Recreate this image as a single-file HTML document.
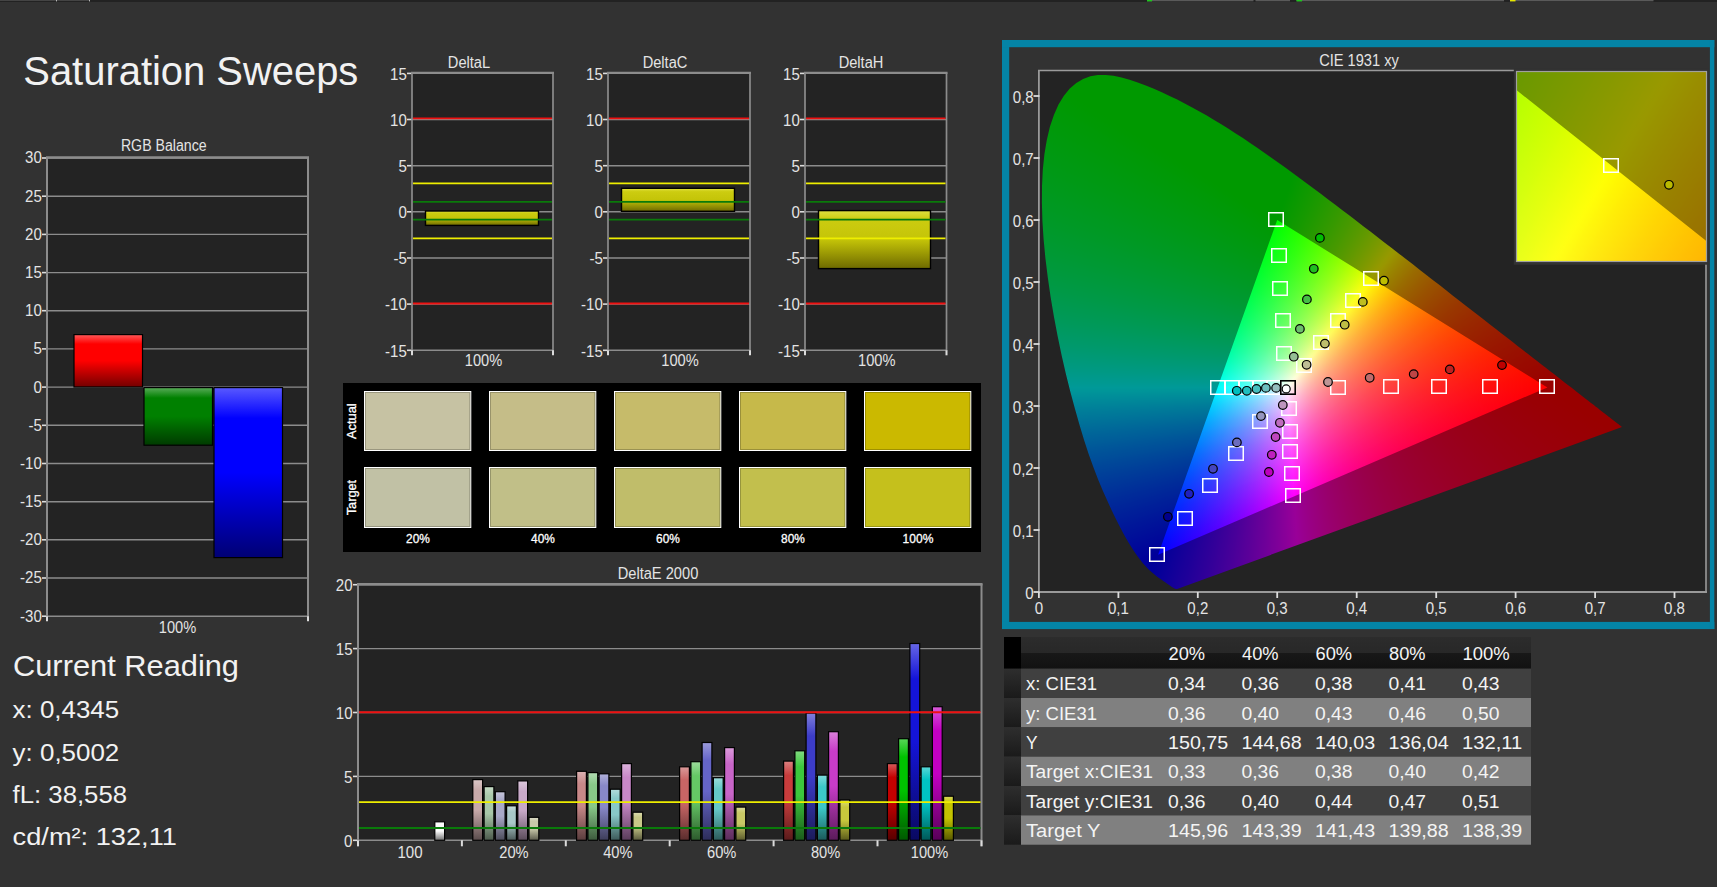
<!DOCTYPE html>
<html lang="en"><head><meta charset="utf-8"><title>Saturation Sweeps</title>
<style>
html,body{margin:0;padding:0;background:#323232;}
body{width:1717px;height:887px;position:relative;overflow:hidden;font-family:"Liberation Sans", sans-serif;}
svg{position:absolute;left:0;top:0;}
svg text{font-family:"Liberation Sans", sans-serif;}
.pbg{position:absolute;background:#232323;}
.cbox{position:absolute;overflow:hidden;isolation:isolate;}
.cl{position:absolute;left:0;top:0;right:0;bottom:0;mix-blend-mode:darken;}
.cl:first-child{mix-blend-mode:normal;}
.dk{position:absolute;left:0;top:0;right:0;bottom:0;background:rgba(0,0,0,0.4);}
</style></head>
<body>
<svg width="1717" height="887" viewBox="0 0 1717 887"><defs><linearGradient id="g1" x1="0" y1="0" x2="0" y2="1"><stop offset="0" stop-color="#ff5959"/><stop offset="0.18" stop-color="#ff0000"/><stop offset="0.5" stop-color="#ff0000"/><stop offset="1" stop-color="#730000"/></linearGradient><linearGradient id="g2" x1="0" y1="0" x2="0" y2="1"><stop offset="0" stop-color="#59ac59"/><stop offset="0.18" stop-color="#008000"/><stop offset="0.5" stop-color="#008000"/><stop offset="1" stop-color="#003a00"/></linearGradient><linearGradient id="g3" x1="0" y1="0" x2="0" y2="1"><stop offset="0" stop-color="#5959ff"/><stop offset="0.18" stop-color="#0000ff"/><stop offset="0.5" stop-color="#0000ff"/><stop offset="1" stop-color="#000073"/></linearGradient><linearGradient id="g4" x1="0" y1="0" x2="0" y2="1"><stop offset="0" stop-color="#e0e040"/><stop offset="0.15" stop-color="#cccc10"/><stop offset="0.5" stop-color="#c4c408"/><stop offset="1" stop-color="#6e6a00"/></linearGradient><linearGradient id="g5" x1="0" y1="0" x2="0" y2="1"><stop offset="0" stop-color="#e0e040"/><stop offset="0.15" stop-color="#cccc10"/><stop offset="0.5" stop-color="#c4c408"/><stop offset="1" stop-color="#6e6a00"/></linearGradient><linearGradient id="g6" x1="0" y1="0" x2="0" y2="1"><stop offset="0" stop-color="#e0e040"/><stop offset="0.15" stop-color="#cccc10"/><stop offset="0.5" stop-color="#c4c408"/><stop offset="1" stop-color="#6e6a00"/></linearGradient><linearGradient id="g7" x1="0" y1="0" x2="0" y2="1"><stop offset="0" stop-color="#fcfcfc"/><stop offset="0.18" stop-color="#fafafa"/><stop offset="0.5" stop-color="#fafafa"/><stop offset="1" stop-color="#707070"/></linearGradient><linearGradient id="g8" x1="0" y1="0" x2="0" y2="1"><stop offset="0" stop-color="#dbc7c7"/><stop offset="0.18" stop-color="#c8a9a9"/><stop offset="0.5" stop-color="#c8a9a9"/><stop offset="1" stop-color="#5a4c4c"/></linearGradient><linearGradient id="g9" x1="0" y1="0" x2="0" y2="1"><stop offset="0" stop-color="#c7dbc7"/><stop offset="0.18" stop-color="#a9c8a9"/><stop offset="0.5" stop-color="#a9c8a9"/><stop offset="1" stop-color="#4c5a4c"/></linearGradient><linearGradient id="g10" x1="0" y1="0" x2="0" y2="1"><stop offset="0" stop-color="#c7c7db"/><stop offset="0.18" stop-color="#a9a9c8"/><stop offset="0.5" stop-color="#a9a9c8"/><stop offset="1" stop-color="#4c4c5a"/></linearGradient><linearGradient id="g11" x1="0" y1="0" x2="0" y2="1"><stop offset="0" stop-color="#c7dbdb"/><stop offset="0.18" stop-color="#a9c8c8"/><stop offset="0.5" stop-color="#a9c8c8"/><stop offset="1" stop-color="#4c5a5a"/></linearGradient><linearGradient id="g12" x1="0" y1="0" x2="0" y2="1"><stop offset="0" stop-color="#dbc7db"/><stop offset="0.18" stop-color="#c8a9c8"/><stop offset="0.5" stop-color="#c8a9c8"/><stop offset="1" stop-color="#5a4c5a"/></linearGradient><linearGradient id="g13" x1="0" y1="0" x2="0" y2="1"><stop offset="0" stop-color="#dbdbc7"/><stop offset="0.18" stop-color="#c8c8a9"/><stop offset="0.5" stop-color="#c8c8a9"/><stop offset="1" stop-color="#5a5a4c"/></linearGradient><linearGradient id="g14" x1="0" y1="0" x2="0" y2="1"><stop offset="0" stop-color="#dbb2b2"/><stop offset="0.18" stop-color="#c88888"/><stop offset="0.5" stop-color="#c88888"/><stop offset="1" stop-color="#5a3d3d"/></linearGradient><linearGradient id="g15" x1="0" y1="0" x2="0" y2="1"><stop offset="0" stop-color="#b2dbb2"/><stop offset="0.18" stop-color="#88c888"/><stop offset="0.5" stop-color="#88c888"/><stop offset="1" stop-color="#3d5a3d"/></linearGradient><linearGradient id="g16" x1="0" y1="0" x2="0" y2="1"><stop offset="0" stop-color="#b2b2db"/><stop offset="0.18" stop-color="#8888c8"/><stop offset="0.5" stop-color="#8888c8"/><stop offset="1" stop-color="#3d3d5a"/></linearGradient><linearGradient id="g17" x1="0" y1="0" x2="0" y2="1"><stop offset="0" stop-color="#b2dbdb"/><stop offset="0.18" stop-color="#88c8c8"/><stop offset="0.5" stop-color="#88c8c8"/><stop offset="1" stop-color="#3d5a5a"/></linearGradient><linearGradient id="g18" x1="0" y1="0" x2="0" y2="1"><stop offset="0" stop-color="#dbb2db"/><stop offset="0.18" stop-color="#c888c8"/><stop offset="0.5" stop-color="#c888c8"/><stop offset="1" stop-color="#5a3d5a"/></linearGradient><linearGradient id="g19" x1="0" y1="0" x2="0" y2="1"><stop offset="0" stop-color="#dbdbb2"/><stop offset="0.18" stop-color="#c8c888"/><stop offset="0.5" stop-color="#c8c888"/><stop offset="1" stop-color="#5a5a3d"/></linearGradient><linearGradient id="g20" x1="0" y1="0" x2="0" y2="1"><stop offset="0" stop-color="#db9b9b"/><stop offset="0.18" stop-color="#c86565"/><stop offset="0.5" stop-color="#c86565"/><stop offset="1" stop-color="#5a2d2d"/></linearGradient><linearGradient id="g21" x1="0" y1="0" x2="0" y2="1"><stop offset="0" stop-color="#9bdb9b"/><stop offset="0.18" stop-color="#65c865"/><stop offset="0.5" stop-color="#65c865"/><stop offset="1" stop-color="#2d5a2d"/></linearGradient><linearGradient id="g22" x1="0" y1="0" x2="0" y2="1"><stop offset="0" stop-color="#9b9bdb"/><stop offset="0.18" stop-color="#6565c8"/><stop offset="0.5" stop-color="#6565c8"/><stop offset="1" stop-color="#2d2d5a"/></linearGradient><linearGradient id="g23" x1="0" y1="0" x2="0" y2="1"><stop offset="0" stop-color="#9bdbdb"/><stop offset="0.18" stop-color="#65c8c8"/><stop offset="0.5" stop-color="#65c8c8"/><stop offset="1" stop-color="#2d5a5a"/></linearGradient><linearGradient id="g24" x1="0" y1="0" x2="0" y2="1"><stop offset="0" stop-color="#db9bdb"/><stop offset="0.18" stop-color="#c865c8"/><stop offset="0.5" stop-color="#c865c8"/><stop offset="1" stop-color="#5a2d5a"/></linearGradient><linearGradient id="g25" x1="0" y1="0" x2="0" y2="1"><stop offset="0" stop-color="#dbdb9b"/><stop offset="0.18" stop-color="#c8c865"/><stop offset="0.5" stop-color="#c8c865"/><stop offset="1" stop-color="#5a5a2d"/></linearGradient><linearGradient id="g26" x1="0" y1="0" x2="0" y2="1"><stop offset="0" stop-color="#db8080"/><stop offset="0.18" stop-color="#c83c3c"/><stop offset="0.5" stop-color="#c83c3c"/><stop offset="1" stop-color="#5a1b1b"/></linearGradient><linearGradient id="g27" x1="0" y1="0" x2="0" y2="1"><stop offset="0" stop-color="#80db80"/><stop offset="0.18" stop-color="#3cc83c"/><stop offset="0.5" stop-color="#3cc83c"/><stop offset="1" stop-color="#1b5a1b"/></linearGradient><linearGradient id="g28" x1="0" y1="0" x2="0" y2="1"><stop offset="0" stop-color="#8080db"/><stop offset="0.18" stop-color="#3c3cc8"/><stop offset="0.5" stop-color="#3c3cc8"/><stop offset="1" stop-color="#1b1b5a"/></linearGradient><linearGradient id="g29" x1="0" y1="0" x2="0" y2="1"><stop offset="0" stop-color="#80dbdb"/><stop offset="0.18" stop-color="#3cc8c8"/><stop offset="0.5" stop-color="#3cc8c8"/><stop offset="1" stop-color="#1b5a5a"/></linearGradient><linearGradient id="g30" x1="0" y1="0" x2="0" y2="1"><stop offset="0" stop-color="#db80db"/><stop offset="0.18" stop-color="#c83cc8"/><stop offset="0.5" stop-color="#c83cc8"/><stop offset="1" stop-color="#5a1b5a"/></linearGradient><linearGradient id="g31" x1="0" y1="0" x2="0" y2="1"><stop offset="0" stop-color="#dbdb80"/><stop offset="0.18" stop-color="#c8c83c"/><stop offset="0.5" stop-color="#c8c83c"/><stop offset="1" stop-color="#5a5a1b"/></linearGradient><linearGradient id="g32" x1="0" y1="0" x2="0" y2="1"><stop offset="0" stop-color="#d85959"/><stop offset="0.18" stop-color="#c30000"/><stop offset="0.5" stop-color="#c30000"/><stop offset="1" stop-color="#580000"/></linearGradient><linearGradient id="g33" x1="0" y1="0" x2="0" y2="1"><stop offset="0" stop-color="#59d859"/><stop offset="0.18" stop-color="#00c300"/><stop offset="0.5" stop-color="#00c300"/><stop offset="1" stop-color="#005800"/></linearGradient><linearGradient id="g34" x1="0" y1="0" x2="0" y2="1"><stop offset="0" stop-color="#6666e5"/><stop offset="0.18" stop-color="#1414d7"/><stop offset="0.5" stop-color="#1414d7"/><stop offset="1" stop-color="#090961"/></linearGradient><linearGradient id="g35" x1="0" y1="0" x2="0" y2="1"><stop offset="0" stop-color="#59d8d8"/><stop offset="0.18" stop-color="#00c3c3"/><stop offset="0.5" stop-color="#00c3c3"/><stop offset="1" stop-color="#005858"/></linearGradient><linearGradient id="g36" x1="0" y1="0" x2="0" y2="1"><stop offset="0" stop-color="#d859d8"/><stop offset="0.18" stop-color="#c300c3"/><stop offset="0.5" stop-color="#c300c3"/><stop offset="1" stop-color="#580058"/></linearGradient><linearGradient id="g37" x1="0" y1="0" x2="0" y2="1"><stop offset="0" stop-color="#d8d859"/><stop offset="0.18" stop-color="#c3c300"/><stop offset="0.5" stop-color="#c3c300"/><stop offset="1" stop-color="#585800"/></linearGradient><linearGradient id="g38" x1="0" y1="0" x2="0" y2="1"><stop offset="0" stop-color="#2c2c2c"/><stop offset="0.49" stop-color="#282828"/><stop offset="0.5" stop-color="#181818"/><stop offset="1" stop-color="#121212"/></linearGradient><linearGradient id="g39" x1="0" y1="0" x2="0" y2="1"><stop offset="0" stop-color="#2e2e2e"/><stop offset="0.5" stop-color="#242424"/><stop offset="1" stop-color="#1a1a1a"/></linearGradient><linearGradient id="g40" x1="0" y1="0" x2="0" y2="1"><stop offset="0" stop-color="#2e2e2e"/><stop offset="0.5" stop-color="#242424"/><stop offset="1" stop-color="#1a1a1a"/></linearGradient><linearGradient id="g41" x1="0" y1="0" x2="0" y2="1"><stop offset="0" stop-color="#2e2e2e"/><stop offset="0.5" stop-color="#242424"/><stop offset="1" stop-color="#1a1a1a"/></linearGradient><linearGradient id="g42" x1="0" y1="0" x2="0" y2="1"><stop offset="0" stop-color="#2e2e2e"/><stop offset="0.5" stop-color="#242424"/><stop offset="1" stop-color="#1a1a1a"/></linearGradient><linearGradient id="g43" x1="0" y1="0" x2="0" y2="1"><stop offset="0" stop-color="#2e2e2e"/><stop offset="0.5" stop-color="#242424"/><stop offset="1" stop-color="#1a1a1a"/></linearGradient><linearGradient id="g44" x1="0" y1="0" x2="0" y2="1"><stop offset="0" stop-color="#2e2e2e"/><stop offset="0.5" stop-color="#242424"/><stop offset="1" stop-color="#1a1a1a"/></linearGradient></defs>
<rect x="0.0" y="0.0" width="1717.0" height="2.0" fill="#222"/>
<rect x="0.0" y="0.0" width="90.0" height="1.0" fill="#444"/>
<rect x="56.0" y="0.0" width="1.0" height="1.4" fill="#bbb"/>
<rect x="89.0" y="0.0" width="1.0" height="1.4" fill="#bbb"/>
<rect x="1147.0" y="0.0" width="106.5" height="1.3" fill="#5a5a5a"/>
<rect x="1255.5" y="0.0" width="34.5" height="1.3" fill="#5a5a5a"/>
<rect x="1296.5" y="0.0" width="207.5" height="1.3" fill="#5a5a5a"/>
<rect x="1510.0" y="0.0" width="143.5" height="1.3" fill="#5a5a5a"/>
<rect x="1147.0" y="0.0" width="5.0" height="1.4" fill="#1ec81e"/>
<rect x="1296.5" y="0.0" width="5.5" height="1.4" fill="#1ec81e"/>
<rect x="1510.0" y="0.0" width="5.5" height="1.4" fill="#e6e600"/>
<text x="23.3" y="85.0" font-size="40" text-anchor="start" fill="#f2f2f2" textLength="335.0" lengthAdjust="spacingAndGlyphs">Saturation Sweeps</text>
<rect x="47.0" y="158.0" width="261.0" height="458.2" fill="#232323"/>
<line x1="47.0" y1="158.0" x2="308.0" y2="158.0" stroke="#8c8c8c" stroke-width="1.4"/>
<line x1="42.0" y1="158.0" x2="47.0" y2="158.0" stroke="#dcdcdc" stroke-width="1.6"/>
<text x="41.8" y="163.4" font-size="16" text-anchor="end" fill="#e4e4e4" textLength="16.7" lengthAdjust="spacingAndGlyphs">30</text>
<line x1="47.0" y1="196.2" x2="308.0" y2="196.2" stroke="#8c8c8c" stroke-width="1.4"/>
<line x1="42.0" y1="196.2" x2="47.0" y2="196.2" stroke="#dcdcdc" stroke-width="1.6"/>
<text x="41.8" y="201.6" font-size="16" text-anchor="end" fill="#e4e4e4" textLength="16.7" lengthAdjust="spacingAndGlyphs">25</text>
<line x1="47.0" y1="234.4" x2="308.0" y2="234.4" stroke="#8c8c8c" stroke-width="1.4"/>
<line x1="42.0" y1="234.4" x2="47.0" y2="234.4" stroke="#dcdcdc" stroke-width="1.6"/>
<text x="41.8" y="239.8" font-size="16" text-anchor="end" fill="#e4e4e4" textLength="16.7" lengthAdjust="spacingAndGlyphs">20</text>
<line x1="47.0" y1="272.6" x2="308.0" y2="272.6" stroke="#8c8c8c" stroke-width="1.4"/>
<line x1="42.0" y1="272.6" x2="47.0" y2="272.6" stroke="#dcdcdc" stroke-width="1.6"/>
<text x="41.8" y="277.9" font-size="16" text-anchor="end" fill="#e4e4e4" textLength="16.7" lengthAdjust="spacingAndGlyphs">15</text>
<line x1="47.0" y1="310.7" x2="308.0" y2="310.7" stroke="#8c8c8c" stroke-width="1.4"/>
<line x1="42.0" y1="310.7" x2="47.0" y2="310.7" stroke="#dcdcdc" stroke-width="1.6"/>
<text x="41.8" y="316.1" font-size="16" text-anchor="end" fill="#e4e4e4" textLength="16.7" lengthAdjust="spacingAndGlyphs">10</text>
<line x1="47.0" y1="348.9" x2="308.0" y2="348.9" stroke="#8c8c8c" stroke-width="1.4"/>
<line x1="42.0" y1="348.9" x2="47.0" y2="348.9" stroke="#dcdcdc" stroke-width="1.6"/>
<text x="41.8" y="354.3" font-size="16" text-anchor="end" fill="#e4e4e4" textLength="8.4" lengthAdjust="spacingAndGlyphs">5</text>
<line x1="47.0" y1="387.1" x2="308.0" y2="387.1" stroke="#8c8c8c" stroke-width="1.4"/>
<line x1="42.0" y1="387.1" x2="47.0" y2="387.1" stroke="#dcdcdc" stroke-width="1.6"/>
<text x="41.8" y="392.5" font-size="16" text-anchor="end" fill="#e4e4e4" textLength="8.4" lengthAdjust="spacingAndGlyphs">0</text>
<line x1="47.0" y1="425.3" x2="308.0" y2="425.3" stroke="#8c8c8c" stroke-width="1.4"/>
<line x1="42.0" y1="425.3" x2="47.0" y2="425.3" stroke="#dcdcdc" stroke-width="1.6"/>
<text x="41.8" y="430.7" font-size="16" text-anchor="end" fill="#e4e4e4" textLength="13.4" lengthAdjust="spacingAndGlyphs">-5</text>
<line x1="47.0" y1="463.5" x2="308.0" y2="463.5" stroke="#8c8c8c" stroke-width="1.4"/>
<line x1="42.0" y1="463.5" x2="47.0" y2="463.5" stroke="#dcdcdc" stroke-width="1.6"/>
<text x="41.8" y="468.9" font-size="16" text-anchor="end" fill="#e4e4e4" textLength="21.7" lengthAdjust="spacingAndGlyphs">-10</text>
<line x1="47.0" y1="501.7" x2="308.0" y2="501.7" stroke="#8c8c8c" stroke-width="1.4"/>
<line x1="42.0" y1="501.7" x2="47.0" y2="501.7" stroke="#dcdcdc" stroke-width="1.6"/>
<text x="41.8" y="507.1" font-size="16" text-anchor="end" fill="#e4e4e4" textLength="21.7" lengthAdjust="spacingAndGlyphs">-15</text>
<line x1="47.0" y1="539.8" x2="308.0" y2="539.8" stroke="#8c8c8c" stroke-width="1.4"/>
<line x1="42.0" y1="539.8" x2="47.0" y2="539.8" stroke="#dcdcdc" stroke-width="1.6"/>
<text x="41.8" y="545.2" font-size="16" text-anchor="end" fill="#e4e4e4" textLength="21.7" lengthAdjust="spacingAndGlyphs">-20</text>
<line x1="47.0" y1="578.0" x2="308.0" y2="578.0" stroke="#8c8c8c" stroke-width="1.4"/>
<line x1="42.0" y1="578.0" x2="47.0" y2="578.0" stroke="#dcdcdc" stroke-width="1.6"/>
<text x="41.8" y="583.4" font-size="16" text-anchor="end" fill="#e4e4e4" textLength="21.7" lengthAdjust="spacingAndGlyphs">-25</text>
<line x1="47.0" y1="616.2" x2="308.0" y2="616.2" stroke="#8c8c8c" stroke-width="1.4"/>
<line x1="42.0" y1="616.2" x2="47.0" y2="616.2" stroke="#dcdcdc" stroke-width="1.6"/>
<text x="41.8" y="621.6" font-size="16" text-anchor="end" fill="#e4e4e4" textLength="21.7" lengthAdjust="spacingAndGlyphs">-30</text>
<line x1="47.0" y1="157.0" x2="47.0" y2="617.2" stroke="#8c8c8c" stroke-width="2"/>
<line x1="308.0" y1="157.0" x2="308.0" y2="617.2" stroke="#8c8c8c" stroke-width="2"/>
<line x1="46.0" y1="157.5" x2="309.0" y2="157.5" stroke="#8c8c8c" stroke-width="2.6"/>
<text x="163.8" y="151.0" font-size="16" text-anchor="middle" fill="#e4e4e4" textLength="85.8" lengthAdjust="spacingAndGlyphs">RGB Balance</text>
<line x1="47.0" y1="616.2" x2="47.0" y2="621.2" stroke="#dcdcdc" stroke-width="2"/>
<line x1="308.0" y1="616.2" x2="308.0" y2="621.2" stroke="#dcdcdc" stroke-width="2"/>
<text x="177.5" y="633.0" font-size="16" text-anchor="middle" fill="#e4e4e4" textLength="37.4" lengthAdjust="spacingAndGlyphs">100%</text>
<rect x="74.0" y="334.6" width="68.5" height="52.4" fill="url(#g1)" stroke="#000" stroke-width="1.2"/>
<rect x="144.0" y="387.6" width="68.5" height="57.6" fill="url(#g2)" stroke="#000" stroke-width="1.2"/>
<rect x="214.0" y="387.6" width="68.5" height="170.0" fill="url(#g3)" stroke="#000" stroke-width="1.2"/>
<rect x="412.0" y="73.4" width="141.0" height="276.9" fill="#232323"/>
<line x1="412.0" y1="73.4" x2="553.0" y2="73.4" stroke="#8c8c8c" stroke-width="1.4"/>
<line x1="407.0" y1="73.4" x2="412.0" y2="73.4" stroke="#dcdcdc" stroke-width="1.6"/>
<text x="406.8" y="79.7" font-size="16" text-anchor="end" fill="#e4e4e4" textLength="16.7" lengthAdjust="spacingAndGlyphs">15</text>
<line x1="412.0" y1="119.5" x2="553.0" y2="119.5" stroke="#8c8c8c" stroke-width="1.4"/>
<line x1="407.0" y1="119.5" x2="412.0" y2="119.5" stroke="#dcdcdc" stroke-width="1.6"/>
<text x="406.8" y="125.8" font-size="16" text-anchor="end" fill="#e4e4e4" textLength="16.7" lengthAdjust="spacingAndGlyphs">10</text>
<line x1="412.0" y1="165.7" x2="553.0" y2="165.7" stroke="#8c8c8c" stroke-width="1.4"/>
<line x1="407.0" y1="165.7" x2="412.0" y2="165.7" stroke="#dcdcdc" stroke-width="1.6"/>
<text x="406.8" y="172.0" font-size="16" text-anchor="end" fill="#e4e4e4" textLength="8.4" lengthAdjust="spacingAndGlyphs">5</text>
<line x1="412.0" y1="211.8" x2="553.0" y2="211.8" stroke="#8c8c8c" stroke-width="1.4"/>
<line x1="407.0" y1="211.8" x2="412.0" y2="211.8" stroke="#dcdcdc" stroke-width="1.6"/>
<text x="406.8" y="218.2" font-size="16" text-anchor="end" fill="#e4e4e4" textLength="8.4" lengthAdjust="spacingAndGlyphs">0</text>
<line x1="412.0" y1="258.0" x2="553.0" y2="258.0" stroke="#8c8c8c" stroke-width="1.4"/>
<line x1="407.0" y1="258.0" x2="412.0" y2="258.0" stroke="#dcdcdc" stroke-width="1.6"/>
<text x="406.8" y="264.3" font-size="16" text-anchor="end" fill="#e4e4e4" textLength="13.4" lengthAdjust="spacingAndGlyphs">-5</text>
<line x1="412.0" y1="304.1" x2="553.0" y2="304.1" stroke="#8c8c8c" stroke-width="1.4"/>
<line x1="407.0" y1="304.1" x2="412.0" y2="304.1" stroke="#dcdcdc" stroke-width="1.6"/>
<text x="406.8" y="310.4" font-size="16" text-anchor="end" fill="#e4e4e4" textLength="21.7" lengthAdjust="spacingAndGlyphs">-10</text>
<line x1="412.0" y1="350.3" x2="553.0" y2="350.3" stroke="#8c8c8c" stroke-width="1.4"/>
<line x1="407.0" y1="350.3" x2="412.0" y2="350.3" stroke="#dcdcdc" stroke-width="1.6"/>
<text x="406.8" y="356.6" font-size="16" text-anchor="end" fill="#e4e4e4" textLength="21.7" lengthAdjust="spacingAndGlyphs">-15</text>
<line x1="412.0" y1="72.4" x2="412.0" y2="351.3" stroke="#8c8c8c" stroke-width="1.7"/>
<line x1="553.0" y1="72.4" x2="553.0" y2="351.3" stroke="#8c8c8c" stroke-width="1.7"/>
<line x1="411.0" y1="72.9" x2="554.0" y2="72.9" stroke="#8c8c8c" stroke-width="2.3"/>
<text x="469.0" y="67.8" font-size="16" text-anchor="middle" fill="#e4e4e4" textLength="42.3" lengthAdjust="spacingAndGlyphs">DeltaL</text>
<line x1="412.0" y1="350.3" x2="412.0" y2="355.3" stroke="#dcdcdc" stroke-width="2"/>
<line x1="553.0" y1="350.3" x2="553.0" y2="355.3" stroke="#dcdcdc" stroke-width="2"/>
<text x="483.5" y="366.0" font-size="16" text-anchor="middle" fill="#e4e4e4" textLength="37.4" lengthAdjust="spacingAndGlyphs">100%</text>
<rect x="425.5" y="211.0" width="113.0" height="14.4" fill="url(#g4)" stroke="#000" stroke-width="1.4"/>
<line x1="413.0" y1="118.4" x2="552.0" y2="118.4" stroke="#ee1111" stroke-width="1.8"/>
<line x1="413.0" y1="303.5" x2="552.0" y2="303.5" stroke="#ee1111" stroke-width="1.8"/>
<line x1="413.0" y1="183.4" x2="552.0" y2="183.4" stroke="#eeee00" stroke-width="1.8"/>
<line x1="413.0" y1="238.4" x2="552.0" y2="238.4" stroke="#eeee00" stroke-width="1.8"/>
<line x1="413.0" y1="201.8" x2="552.0" y2="201.8" stroke="#0a7a0a" stroke-width="1.8"/>
<line x1="413.0" y1="219.7" x2="552.0" y2="219.7" stroke="#0a7a0a" stroke-width="1.8"/>
<rect x="608.0" y="73.4" width="142.0" height="276.9" fill="#232323"/>
<line x1="608.0" y1="73.4" x2="750.0" y2="73.4" stroke="#8c8c8c" stroke-width="1.4"/>
<line x1="603.0" y1="73.4" x2="608.0" y2="73.4" stroke="#dcdcdc" stroke-width="1.6"/>
<text x="602.8" y="79.7" font-size="16" text-anchor="end" fill="#e4e4e4" textLength="16.7" lengthAdjust="spacingAndGlyphs">15</text>
<line x1="608.0" y1="119.5" x2="750.0" y2="119.5" stroke="#8c8c8c" stroke-width="1.4"/>
<line x1="603.0" y1="119.5" x2="608.0" y2="119.5" stroke="#dcdcdc" stroke-width="1.6"/>
<text x="602.8" y="125.8" font-size="16" text-anchor="end" fill="#e4e4e4" textLength="16.7" lengthAdjust="spacingAndGlyphs">10</text>
<line x1="608.0" y1="165.7" x2="750.0" y2="165.7" stroke="#8c8c8c" stroke-width="1.4"/>
<line x1="603.0" y1="165.7" x2="608.0" y2="165.7" stroke="#dcdcdc" stroke-width="1.6"/>
<text x="602.8" y="172.0" font-size="16" text-anchor="end" fill="#e4e4e4" textLength="8.4" lengthAdjust="spacingAndGlyphs">5</text>
<line x1="608.0" y1="211.8" x2="750.0" y2="211.8" stroke="#8c8c8c" stroke-width="1.4"/>
<line x1="603.0" y1="211.8" x2="608.0" y2="211.8" stroke="#dcdcdc" stroke-width="1.6"/>
<text x="602.8" y="218.2" font-size="16" text-anchor="end" fill="#e4e4e4" textLength="8.4" lengthAdjust="spacingAndGlyphs">0</text>
<line x1="608.0" y1="258.0" x2="750.0" y2="258.0" stroke="#8c8c8c" stroke-width="1.4"/>
<line x1="603.0" y1="258.0" x2="608.0" y2="258.0" stroke="#dcdcdc" stroke-width="1.6"/>
<text x="602.8" y="264.3" font-size="16" text-anchor="end" fill="#e4e4e4" textLength="13.4" lengthAdjust="spacingAndGlyphs">-5</text>
<line x1="608.0" y1="304.1" x2="750.0" y2="304.1" stroke="#8c8c8c" stroke-width="1.4"/>
<line x1="603.0" y1="304.1" x2="608.0" y2="304.1" stroke="#dcdcdc" stroke-width="1.6"/>
<text x="602.8" y="310.4" font-size="16" text-anchor="end" fill="#e4e4e4" textLength="21.7" lengthAdjust="spacingAndGlyphs">-10</text>
<line x1="608.0" y1="350.3" x2="750.0" y2="350.3" stroke="#8c8c8c" stroke-width="1.4"/>
<line x1="603.0" y1="350.3" x2="608.0" y2="350.3" stroke="#dcdcdc" stroke-width="1.6"/>
<text x="602.8" y="356.6" font-size="16" text-anchor="end" fill="#e4e4e4" textLength="21.7" lengthAdjust="spacingAndGlyphs">-15</text>
<line x1="608.0" y1="72.4" x2="608.0" y2="351.3" stroke="#8c8c8c" stroke-width="1.7"/>
<line x1="750.0" y1="72.4" x2="750.0" y2="351.3" stroke="#8c8c8c" stroke-width="1.7"/>
<line x1="607.0" y1="72.9" x2="751.0" y2="72.9" stroke="#8c8c8c" stroke-width="2.3"/>
<text x="665.0" y="67.8" font-size="16" text-anchor="middle" fill="#e4e4e4" textLength="44.7" lengthAdjust="spacingAndGlyphs">DeltaC</text>
<line x1="608.0" y1="350.3" x2="608.0" y2="355.3" stroke="#dcdcdc" stroke-width="2"/>
<line x1="750.0" y1="350.3" x2="750.0" y2="355.3" stroke="#dcdcdc" stroke-width="2"/>
<text x="680.0" y="366.0" font-size="16" text-anchor="middle" fill="#e4e4e4" textLength="37.4" lengthAdjust="spacingAndGlyphs">100%</text>
<rect x="621.5" y="188.3" width="113.0" height="23.0" fill="url(#g5)" stroke="#000" stroke-width="1.4"/>
<line x1="609.0" y1="118.4" x2="749.0" y2="118.4" stroke="#ee1111" stroke-width="1.8"/>
<line x1="609.0" y1="303.5" x2="749.0" y2="303.5" stroke="#ee1111" stroke-width="1.8"/>
<line x1="609.0" y1="183.4" x2="749.0" y2="183.4" stroke="#eeee00" stroke-width="1.8"/>
<line x1="609.0" y1="238.4" x2="749.0" y2="238.4" stroke="#eeee00" stroke-width="1.8"/>
<line x1="609.0" y1="201.8" x2="749.0" y2="201.8" stroke="#0a7a0a" stroke-width="1.8"/>
<line x1="609.0" y1="219.7" x2="749.0" y2="219.7" stroke="#0a7a0a" stroke-width="1.8"/>
<rect x="805.0" y="73.4" width="141.5" height="276.9" fill="#232323"/>
<line x1="805.0" y1="73.4" x2="946.5" y2="73.4" stroke="#8c8c8c" stroke-width="1.4"/>
<line x1="800.0" y1="73.4" x2="805.0" y2="73.4" stroke="#dcdcdc" stroke-width="1.6"/>
<text x="799.8" y="79.7" font-size="16" text-anchor="end" fill="#e4e4e4" textLength="16.7" lengthAdjust="spacingAndGlyphs">15</text>
<line x1="805.0" y1="119.5" x2="946.5" y2="119.5" stroke="#8c8c8c" stroke-width="1.4"/>
<line x1="800.0" y1="119.5" x2="805.0" y2="119.5" stroke="#dcdcdc" stroke-width="1.6"/>
<text x="799.8" y="125.8" font-size="16" text-anchor="end" fill="#e4e4e4" textLength="16.7" lengthAdjust="spacingAndGlyphs">10</text>
<line x1="805.0" y1="165.7" x2="946.5" y2="165.7" stroke="#8c8c8c" stroke-width="1.4"/>
<line x1="800.0" y1="165.7" x2="805.0" y2="165.7" stroke="#dcdcdc" stroke-width="1.6"/>
<text x="799.8" y="172.0" font-size="16" text-anchor="end" fill="#e4e4e4" textLength="8.4" lengthAdjust="spacingAndGlyphs">5</text>
<line x1="805.0" y1="211.8" x2="946.5" y2="211.8" stroke="#8c8c8c" stroke-width="1.4"/>
<line x1="800.0" y1="211.8" x2="805.0" y2="211.8" stroke="#dcdcdc" stroke-width="1.6"/>
<text x="799.8" y="218.2" font-size="16" text-anchor="end" fill="#e4e4e4" textLength="8.4" lengthAdjust="spacingAndGlyphs">0</text>
<line x1="805.0" y1="258.0" x2="946.5" y2="258.0" stroke="#8c8c8c" stroke-width="1.4"/>
<line x1="800.0" y1="258.0" x2="805.0" y2="258.0" stroke="#dcdcdc" stroke-width="1.6"/>
<text x="799.8" y="264.3" font-size="16" text-anchor="end" fill="#e4e4e4" textLength="13.4" lengthAdjust="spacingAndGlyphs">-5</text>
<line x1="805.0" y1="304.1" x2="946.5" y2="304.1" stroke="#8c8c8c" stroke-width="1.4"/>
<line x1="800.0" y1="304.1" x2="805.0" y2="304.1" stroke="#dcdcdc" stroke-width="1.6"/>
<text x="799.8" y="310.4" font-size="16" text-anchor="end" fill="#e4e4e4" textLength="21.7" lengthAdjust="spacingAndGlyphs">-10</text>
<line x1="805.0" y1="350.3" x2="946.5" y2="350.3" stroke="#8c8c8c" stroke-width="1.4"/>
<line x1="800.0" y1="350.3" x2="805.0" y2="350.3" stroke="#dcdcdc" stroke-width="1.6"/>
<text x="799.8" y="356.6" font-size="16" text-anchor="end" fill="#e4e4e4" textLength="21.7" lengthAdjust="spacingAndGlyphs">-15</text>
<line x1="805.0" y1="72.4" x2="805.0" y2="351.3" stroke="#8c8c8c" stroke-width="1.7"/>
<line x1="946.5" y1="72.4" x2="946.5" y2="351.3" stroke="#8c8c8c" stroke-width="1.7"/>
<line x1="804.0" y1="72.9" x2="947.5" y2="72.9" stroke="#8c8c8c" stroke-width="2.3"/>
<text x="861.0" y="67.8" font-size="16" text-anchor="middle" fill="#e4e4e4" textLength="44.7" lengthAdjust="spacingAndGlyphs">DeltaH</text>
<line x1="805.0" y1="350.3" x2="805.0" y2="355.3" stroke="#dcdcdc" stroke-width="2"/>
<line x1="946.5" y1="350.3" x2="946.5" y2="355.3" stroke="#dcdcdc" stroke-width="2"/>
<text x="876.8" y="366.0" font-size="16" text-anchor="middle" fill="#e4e4e4" textLength="37.4" lengthAdjust="spacingAndGlyphs">100%</text>
<rect x="818.5" y="210.6" width="112.0" height="58.0" fill="url(#g6)" stroke="#000" stroke-width="1.4"/>
<line x1="806.0" y1="118.4" x2="945.5" y2="118.4" stroke="#ee1111" stroke-width="1.8"/>
<line x1="806.0" y1="303.5" x2="945.5" y2="303.5" stroke="#ee1111" stroke-width="1.8"/>
<line x1="806.0" y1="183.4" x2="945.5" y2="183.4" stroke="#eeee00" stroke-width="1.8"/>
<line x1="806.0" y1="238.4" x2="945.5" y2="238.4" stroke="#eeee00" stroke-width="1.8"/>
<line x1="806.0" y1="201.8" x2="945.5" y2="201.8" stroke="#0a7a0a" stroke-width="1.8"/>
<line x1="806.0" y1="219.7" x2="945.5" y2="219.7" stroke="#0a7a0a" stroke-width="1.8"/>
<rect x="343.0" y="383.0" width="638.0" height="169.0" fill="#000"/>
<rect x="364.5" y="391.5" width="106.3" height="59.0" fill="#c6c2a3" stroke="#fff" stroke-width="1"/>
<rect x="365.5" y="392.5" width="104.3" height="57.0" fill="none" stroke="rgba(0,0,0,0.22)" stroke-width="1"/>
<rect x="364.5" y="467.5" width="106.3" height="60.0" fill="#c1c1a5" stroke="#fff" stroke-width="1"/>
<rect x="365.5" y="468.5" width="104.3" height="58.0" fill="none" stroke="rgba(0,0,0,0.22)" stroke-width="1"/>
<text x="418.0" y="543.0" font-size="12.8" text-anchor="middle" fill="#fff" textLength="23.8" lengthAdjust="spacingAndGlyphs" stroke="#fff" stroke-width="0.3">20%</text>
<rect x="489.5" y="391.5" width="106.3" height="59.0" fill="#c5bd88" stroke="#fff" stroke-width="1"/>
<rect x="490.5" y="392.5" width="104.3" height="57.0" fill="none" stroke="rgba(0,0,0,0.22)" stroke-width="1"/>
<rect x="489.5" y="467.5" width="106.3" height="60.0" fill="#c1bf88" stroke="#fff" stroke-width="1"/>
<rect x="490.5" y="468.5" width="104.3" height="58.0" fill="none" stroke="rgba(0,0,0,0.22)" stroke-width="1"/>
<text x="543.0" y="543.0" font-size="12.8" text-anchor="middle" fill="#fff" textLength="23.8" lengthAdjust="spacingAndGlyphs" stroke="#fff" stroke-width="0.3">40%</text>
<rect x="614.5" y="391.5" width="106.3" height="59.0" fill="#c6bb6a" stroke="#fff" stroke-width="1"/>
<rect x="615.5" y="392.5" width="104.3" height="57.0" fill="none" stroke="rgba(0,0,0,0.22)" stroke-width="1"/>
<rect x="614.5" y="467.5" width="106.3" height="60.0" fill="#c0bd6a" stroke="#fff" stroke-width="1"/>
<rect x="615.5" y="468.5" width="104.3" height="58.0" fill="none" stroke="rgba(0,0,0,0.22)" stroke-width="1"/>
<text x="668.0" y="543.0" font-size="12.8" text-anchor="middle" fill="#fff" textLength="23.8" lengthAdjust="spacingAndGlyphs" stroke="#fff" stroke-width="0.3">60%</text>
<rect x="739.5" y="391.5" width="106.3" height="59.0" fill="#c6b94a" stroke="#fff" stroke-width="1"/>
<rect x="740.5" y="392.5" width="104.3" height="57.0" fill="none" stroke="rgba(0,0,0,0.22)" stroke-width="1"/>
<rect x="739.5" y="467.5" width="106.3" height="60.0" fill="#c2bf4d" stroke="#fff" stroke-width="1"/>
<rect x="740.5" y="468.5" width="104.3" height="58.0" fill="none" stroke="rgba(0,0,0,0.22)" stroke-width="1"/>
<text x="793.0" y="543.0" font-size="12.8" text-anchor="middle" fill="#fff" textLength="23.8" lengthAdjust="spacingAndGlyphs" stroke="#fff" stroke-width="0.3">80%</text>
<rect x="864.5" y="391.5" width="106.3" height="59.0" fill="#cbb900" stroke="#fff" stroke-width="1"/>
<rect x="865.5" y="392.5" width="104.3" height="57.0" fill="none" stroke="rgba(0,0,0,0.22)" stroke-width="1"/>
<rect x="864.5" y="467.5" width="106.3" height="60.0" fill="#c5c01c" stroke="#fff" stroke-width="1"/>
<rect x="865.5" y="468.5" width="104.3" height="58.0" fill="none" stroke="rgba(0,0,0,0.22)" stroke-width="1"/>
<text x="918.0" y="543.0" font-size="12.8" text-anchor="middle" fill="#fff" textLength="30.8" lengthAdjust="spacingAndGlyphs" stroke="#fff" stroke-width="0.3">100%</text>
<text x="0.0" y="0.0" font-size="13" text-anchor="middle" fill="#fff" textLength="35.8" lengthAdjust="spacingAndGlyphs" stroke="#fff" stroke-width="0.3" transform="translate(355.8,421.2) rotate(-90)">Actual</text>
<text x="0.0" y="0.0" font-size="13" text-anchor="middle" fill="#fff" textLength="35.5" lengthAdjust="spacingAndGlyphs" stroke="#fff" stroke-width="0.3" transform="translate(355.8,497.6) rotate(-90)">Target</text>
<rect x="358.0" y="584.7" width="623.5" height="255.6" fill="#232323"/>
<line x1="358.0" y1="584.7" x2="981.5" y2="584.7" stroke="#8c8c8c" stroke-width="1.4"/>
<line x1="353.0" y1="584.7" x2="358.0" y2="584.7" stroke="#dcdcdc" stroke-width="1.6"/>
<text x="352.5" y="591.1" font-size="16" text-anchor="end" fill="#e4e4e4" textLength="16.7" lengthAdjust="spacingAndGlyphs">20</text>
<line x1="358.0" y1="648.6" x2="981.5" y2="648.6" stroke="#8c8c8c" stroke-width="1.4"/>
<line x1="353.0" y1="648.6" x2="358.0" y2="648.6" stroke="#dcdcdc" stroke-width="1.6"/>
<text x="352.5" y="655.0" font-size="16" text-anchor="end" fill="#e4e4e4" textLength="16.7" lengthAdjust="spacingAndGlyphs">15</text>
<line x1="358.0" y1="712.5" x2="981.5" y2="712.5" stroke="#8c8c8c" stroke-width="1.4"/>
<line x1="353.0" y1="712.5" x2="358.0" y2="712.5" stroke="#dcdcdc" stroke-width="1.6"/>
<text x="352.5" y="718.9" font-size="16" text-anchor="end" fill="#e4e4e4" textLength="16.7" lengthAdjust="spacingAndGlyphs">10</text>
<line x1="358.0" y1="776.4" x2="981.5" y2="776.4" stroke="#8c8c8c" stroke-width="1.4"/>
<line x1="353.0" y1="776.4" x2="358.0" y2="776.4" stroke="#dcdcdc" stroke-width="1.6"/>
<text x="352.5" y="782.8" font-size="16" text-anchor="end" fill="#e4e4e4" textLength="8.4" lengthAdjust="spacingAndGlyphs">5</text>
<line x1="358.0" y1="840.3" x2="981.5" y2="840.3" stroke="#8c8c8c" stroke-width="1.4"/>
<line x1="353.0" y1="840.3" x2="358.0" y2="840.3" stroke="#dcdcdc" stroke-width="1.6"/>
<text x="352.5" y="846.7" font-size="16" text-anchor="end" fill="#e4e4e4" textLength="8.4" lengthAdjust="spacingAndGlyphs">0</text>
<line x1="358.0" y1="583.7" x2="358.0" y2="846.3" stroke="#8c8c8c" stroke-width="2"/>
<line x1="981.5" y1="583.7" x2="981.5" y2="846.3" stroke="#8c8c8c" stroke-width="2"/>
<line x1="357.0" y1="584.2" x2="982.5" y2="584.2" stroke="#8c8c8c" stroke-width="2.6"/>
<text x="658.0" y="579.0" font-size="16" text-anchor="middle" fill="#e4e4e4" textLength="80.6" lengthAdjust="spacingAndGlyphs">DeltaE 2000</text>
<line x1="358.0" y1="840.3" x2="358.0" y2="846.3" stroke="#dcdcdc" stroke-width="2"/>
<text x="410.0" y="857.5" font-size="16" text-anchor="middle" fill="#e4e4e4" textLength="25.1" lengthAdjust="spacingAndGlyphs">100</text>
<line x1="461.9" y1="840.3" x2="461.9" y2="846.3" stroke="#dcdcdc" stroke-width="2"/>
<text x="513.9" y="857.5" font-size="16" text-anchor="middle" fill="#e4e4e4" textLength="29.3" lengthAdjust="spacingAndGlyphs">20%</text>
<line x1="565.8" y1="840.3" x2="565.8" y2="846.3" stroke="#dcdcdc" stroke-width="2"/>
<text x="617.8" y="857.5" font-size="16" text-anchor="middle" fill="#e4e4e4" textLength="29.3" lengthAdjust="spacingAndGlyphs">40%</text>
<line x1="669.7" y1="840.3" x2="669.7" y2="846.3" stroke="#dcdcdc" stroke-width="2"/>
<text x="721.7" y="857.5" font-size="16" text-anchor="middle" fill="#e4e4e4" textLength="29.3" lengthAdjust="spacingAndGlyphs">60%</text>
<line x1="773.6" y1="840.3" x2="773.6" y2="846.3" stroke="#dcdcdc" stroke-width="2"/>
<text x="825.6" y="857.5" font-size="16" text-anchor="middle" fill="#e4e4e4" textLength="29.3" lengthAdjust="spacingAndGlyphs">80%</text>
<line x1="877.5" y1="840.3" x2="877.5" y2="846.3" stroke="#dcdcdc" stroke-width="2"/>
<text x="929.5" y="857.5" font-size="16" text-anchor="middle" fill="#e4e4e4" textLength="37.4" lengthAdjust="spacingAndGlyphs">100%</text>
<line x1="981.5" y1="840.3" x2="981.5" y2="846.3" stroke="#dcdcdc" stroke-width="2"/>
<rect x="434.8" y="821.8" width="9.8" height="18.5" fill="url(#g7)" stroke="#000" stroke-width="1.2"/>
<rect x="472.8" y="779.6" width="9.8" height="60.7" fill="url(#g8)" stroke="#000" stroke-width="1.2"/>
<rect x="484.1" y="786.6" width="9.8" height="53.7" fill="url(#g9)" stroke="#000" stroke-width="1.2"/>
<rect x="495.3" y="791.7" width="9.8" height="48.6" fill="url(#g10)" stroke="#000" stroke-width="1.2"/>
<rect x="506.6" y="805.8" width="9.8" height="34.5" fill="url(#g11)" stroke="#000" stroke-width="1.2"/>
<rect x="517.8" y="780.9" width="9.8" height="59.4" fill="url(#g12)" stroke="#000" stroke-width="1.2"/>
<rect x="529.0" y="817.3" width="9.8" height="23.0" fill="url(#g13)" stroke="#000" stroke-width="1.2"/>
<rect x="576.6" y="771.3" width="9.8" height="69.0" fill="url(#g14)" stroke="#000" stroke-width="1.2"/>
<rect x="587.9" y="772.6" width="9.8" height="67.7" fill="url(#g15)" stroke="#000" stroke-width="1.2"/>
<rect x="599.1" y="773.8" width="9.8" height="66.5" fill="url(#g16)" stroke="#000" stroke-width="1.2"/>
<rect x="610.4" y="789.2" width="9.8" height="51.1" fill="url(#g17)" stroke="#000" stroke-width="1.2"/>
<rect x="621.6" y="763.6" width="9.8" height="76.7" fill="url(#g18)" stroke="#000" stroke-width="1.2"/>
<rect x="632.9" y="812.2" width="9.8" height="28.1" fill="url(#g19)" stroke="#000" stroke-width="1.2"/>
<rect x="679.6" y="766.8" width="9.8" height="73.5" fill="url(#g20)" stroke="#000" stroke-width="1.2"/>
<rect x="690.9" y="761.7" width="9.8" height="78.6" fill="url(#g21)" stroke="#000" stroke-width="1.2"/>
<rect x="702.1" y="742.5" width="9.8" height="97.8" fill="url(#g22)" stroke="#000" stroke-width="1.2"/>
<rect x="713.4" y="777.7" width="9.8" height="62.6" fill="url(#g23)" stroke="#000" stroke-width="1.2"/>
<rect x="724.6" y="747.6" width="9.8" height="92.7" fill="url(#g24)" stroke="#000" stroke-width="1.2"/>
<rect x="735.9" y="807.1" width="9.8" height="33.2" fill="url(#g25)" stroke="#000" stroke-width="1.2"/>
<rect x="783.6" y="761.1" width="9.8" height="79.2" fill="url(#g26)" stroke="#000" stroke-width="1.2"/>
<rect x="794.9" y="750.8" width="9.8" height="89.5" fill="url(#g27)" stroke="#000" stroke-width="1.2"/>
<rect x="806.1" y="713.1" width="9.8" height="127.2" fill="url(#g28)" stroke="#000" stroke-width="1.2"/>
<rect x="817.4" y="775.1" width="9.8" height="65.2" fill="url(#g29)" stroke="#000" stroke-width="1.2"/>
<rect x="828.6" y="731.7" width="9.8" height="108.6" fill="url(#g30)" stroke="#000" stroke-width="1.2"/>
<rect x="839.9" y="800.0" width="9.8" height="40.3" fill="url(#g31)" stroke="#000" stroke-width="1.2"/>
<rect x="887.4" y="763.6" width="9.8" height="76.7" fill="url(#g32)" stroke="#000" stroke-width="1.2"/>
<rect x="898.6" y="738.7" width="9.8" height="101.6" fill="url(#g33)" stroke="#000" stroke-width="1.2"/>
<rect x="909.9" y="643.5" width="9.8" height="196.8" fill="url(#g34)" stroke="#000" stroke-width="1.2"/>
<rect x="921.1" y="766.8" width="9.8" height="73.5" fill="url(#g35)" stroke="#000" stroke-width="1.2"/>
<rect x="932.4" y="706.7" width="9.8" height="133.6" fill="url(#g36)" stroke="#000" stroke-width="1.2"/>
<rect x="943.6" y="796.2" width="9.8" height="44.1" fill="url(#g37)" stroke="#000" stroke-width="1.2"/>
<line x1="359.0" y1="712.3" x2="980.5" y2="712.3" stroke="#ee1111" stroke-width="2"/>
<line x1="359.0" y1="802.2" x2="980.5" y2="802.2" stroke="#eeee00" stroke-width="1.8"/>
<line x1="359.0" y1="828.0" x2="980.5" y2="828.0" stroke="#0a7a0a" stroke-width="1.8"/>
<text x="13.0" y="675.5" font-size="29" text-anchor="start" fill="#f2f2f2" textLength="226.0" lengthAdjust="spacingAndGlyphs">Current Reading</text>
<text x="12.6" y="718.4" font-size="24.4" text-anchor="start" fill="#f2f2f2" textLength="106.5" lengthAdjust="spacingAndGlyphs">x: 0,4345</text>
<text x="12.6" y="760.5" font-size="24.4" text-anchor="start" fill="#f2f2f2" textLength="106.7" lengthAdjust="spacingAndGlyphs">y: 0,5002</text>
<text x="12.6" y="802.6" font-size="24.4" text-anchor="start" fill="#f2f2f2" textLength="114.4" lengthAdjust="spacingAndGlyphs">fL: 38,558</text>
<text x="12.6" y="844.7" font-size="24.4" text-anchor="start" fill="#f2f2f2" textLength="164.3" lengthAdjust="spacingAndGlyphs">cd/m²: 132,11</text>
<rect x="1004.0" y="637.0" width="527.0" height="31.7" fill="url(#g38)"/>
<rect x="1004.0" y="637.0" width="17.0" height="31.7" fill="#000"/>
<text x="1168.5" y="660.0" font-size="17.6" text-anchor="start" fill="#f4f4f4" textLength="36.6" lengthAdjust="spacingAndGlyphs">20%</text>
<text x="1242.0" y="660.0" font-size="17.6" text-anchor="start" fill="#f4f4f4" textLength="36.6" lengthAdjust="spacingAndGlyphs">40%</text>
<text x="1315.5" y="660.0" font-size="17.6" text-anchor="start" fill="#f4f4f4" textLength="36.6" lengthAdjust="spacingAndGlyphs">60%</text>
<text x="1389.0" y="660.0" font-size="17.6" text-anchor="start" fill="#f4f4f4" textLength="36.6" lengthAdjust="spacingAndGlyphs">80%</text>
<text x="1462.5" y="660.0" font-size="17.6" text-anchor="start" fill="#f4f4f4" textLength="47.2" lengthAdjust="spacingAndGlyphs">100%</text>
<rect x="1021.0" y="668.7" width="510.0" height="29.3" fill="#404040"/>
<rect x="1004.0" y="668.7" width="17.0" height="29.3" fill="url(#g39)"/>
<text x="1026.0" y="690.3" font-size="17.6" text-anchor="start" fill="#f4f4f4" textLength="71.0" lengthAdjust="spacingAndGlyphs">x: CIE31</text>
<text x="1168.0" y="690.3" font-size="17.6" text-anchor="start" fill="#f4f4f4" textLength="37.6" lengthAdjust="spacingAndGlyphs">0,34</text>
<text x="1241.5" y="690.3" font-size="17.6" text-anchor="start" fill="#f4f4f4" textLength="37.6" lengthAdjust="spacingAndGlyphs">0,36</text>
<text x="1315.0" y="690.3" font-size="17.6" text-anchor="start" fill="#f4f4f4" textLength="37.6" lengthAdjust="spacingAndGlyphs">0,38</text>
<text x="1388.5" y="690.3" font-size="17.6" text-anchor="start" fill="#f4f4f4" textLength="37.6" lengthAdjust="spacingAndGlyphs">0,41</text>
<text x="1462.0" y="690.3" font-size="17.6" text-anchor="start" fill="#f4f4f4" textLength="37.6" lengthAdjust="spacingAndGlyphs">0,43</text>
<rect x="1021.0" y="698.0" width="510.0" height="29.3" fill="#808080"/>
<rect x="1004.0" y="698.0" width="17.0" height="29.3" fill="url(#g40)"/>
<text x="1026.0" y="719.6" font-size="17.6" text-anchor="start" fill="#f4f4f4" textLength="71.0" lengthAdjust="spacingAndGlyphs">y: CIE31</text>
<text x="1168.0" y="719.6" font-size="17.6" text-anchor="start" fill="#f4f4f4" textLength="37.6" lengthAdjust="spacingAndGlyphs">0,36</text>
<text x="1241.5" y="719.6" font-size="17.6" text-anchor="start" fill="#f4f4f4" textLength="37.6" lengthAdjust="spacingAndGlyphs">0,40</text>
<text x="1315.0" y="719.6" font-size="17.6" text-anchor="start" fill="#f4f4f4" textLength="37.6" lengthAdjust="spacingAndGlyphs">0,43</text>
<text x="1388.5" y="719.6" font-size="17.6" text-anchor="start" fill="#f4f4f4" textLength="37.6" lengthAdjust="spacingAndGlyphs">0,46</text>
<text x="1462.0" y="719.6" font-size="17.6" text-anchor="start" fill="#f4f4f4" textLength="37.6" lengthAdjust="spacingAndGlyphs">0,50</text>
<rect x="1021.0" y="727.4" width="510.0" height="29.3" fill="#404040"/>
<rect x="1004.0" y="727.4" width="17.0" height="29.3" fill="url(#g41)"/>
<text x="1026.0" y="749.0" font-size="17.6" text-anchor="start" fill="#f4f4f4" textLength="11.6" lengthAdjust="spacingAndGlyphs">Y</text>
<text x="1168.0" y="749.0" font-size="17.6" text-anchor="start" fill="#f4f4f4" textLength="60.2" lengthAdjust="spacingAndGlyphs">150,75</text>
<text x="1241.5" y="749.0" font-size="17.6" text-anchor="start" fill="#f4f4f4" textLength="60.2" lengthAdjust="spacingAndGlyphs">144,68</text>
<text x="1315.0" y="749.0" font-size="17.6" text-anchor="start" fill="#f4f4f4" textLength="60.2" lengthAdjust="spacingAndGlyphs">140,03</text>
<text x="1388.5" y="749.0" font-size="17.6" text-anchor="start" fill="#f4f4f4" textLength="60.2" lengthAdjust="spacingAndGlyphs">136,04</text>
<text x="1462.0" y="749.0" font-size="17.6" text-anchor="start" fill="#f4f4f4" textLength="60.2" lengthAdjust="spacingAndGlyphs">132,11</text>
<rect x="1021.0" y="756.7" width="510.0" height="29.3" fill="#808080"/>
<rect x="1004.0" y="756.7" width="17.0" height="29.3" fill="url(#g42)"/>
<text x="1026.0" y="778.3" font-size="17.6" text-anchor="start" fill="#f4f4f4" textLength="127.0" lengthAdjust="spacingAndGlyphs">Target x:CIE31</text>
<text x="1168.0" y="778.3" font-size="17.6" text-anchor="start" fill="#f4f4f4" textLength="37.6" lengthAdjust="spacingAndGlyphs">0,33</text>
<text x="1241.5" y="778.3" font-size="17.6" text-anchor="start" fill="#f4f4f4" textLength="37.6" lengthAdjust="spacingAndGlyphs">0,36</text>
<text x="1315.0" y="778.3" font-size="17.6" text-anchor="start" fill="#f4f4f4" textLength="37.6" lengthAdjust="spacingAndGlyphs">0,38</text>
<text x="1388.5" y="778.3" font-size="17.6" text-anchor="start" fill="#f4f4f4" textLength="37.6" lengthAdjust="spacingAndGlyphs">0,40</text>
<text x="1462.0" y="778.3" font-size="17.6" text-anchor="start" fill="#f4f4f4" textLength="37.6" lengthAdjust="spacingAndGlyphs">0,42</text>
<rect x="1021.0" y="786.0" width="510.0" height="29.3" fill="#404040"/>
<rect x="1004.0" y="786.0" width="17.0" height="29.3" fill="url(#g43)"/>
<text x="1026.0" y="807.6" font-size="17.6" text-anchor="start" fill="#f4f4f4" textLength="127.0" lengthAdjust="spacingAndGlyphs">Target y:CIE31</text>
<text x="1168.0" y="807.6" font-size="17.6" text-anchor="start" fill="#f4f4f4" textLength="37.6" lengthAdjust="spacingAndGlyphs">0,36</text>
<text x="1241.5" y="807.6" font-size="17.6" text-anchor="start" fill="#f4f4f4" textLength="37.6" lengthAdjust="spacingAndGlyphs">0,40</text>
<text x="1315.0" y="807.6" font-size="17.6" text-anchor="start" fill="#f4f4f4" textLength="37.6" lengthAdjust="spacingAndGlyphs">0,44</text>
<text x="1388.5" y="807.6" font-size="17.6" text-anchor="start" fill="#f4f4f4" textLength="37.6" lengthAdjust="spacingAndGlyphs">0,47</text>
<text x="1462.0" y="807.6" font-size="17.6" text-anchor="start" fill="#f4f4f4" textLength="37.6" lengthAdjust="spacingAndGlyphs">0,51</text>
<rect x="1021.0" y="815.4" width="510.0" height="29.3" fill="#808080"/>
<rect x="1004.0" y="815.4" width="17.0" height="29.3" fill="url(#g44)"/>
<text x="1026.0" y="837.0" font-size="17.6" text-anchor="start" fill="#f4f4f4" textLength="74.5" lengthAdjust="spacingAndGlyphs">Target Y</text>
<text x="1168.0" y="837.0" font-size="17.6" text-anchor="start" fill="#f4f4f4" textLength="60.2" lengthAdjust="spacingAndGlyphs">145,96</text>
<text x="1241.5" y="837.0" font-size="17.6" text-anchor="start" fill="#f4f4f4" textLength="60.2" lengthAdjust="spacingAndGlyphs">143,39</text>
<text x="1315.0" y="837.0" font-size="17.6" text-anchor="start" fill="#f4f4f4" textLength="60.2" lengthAdjust="spacingAndGlyphs">141,43</text>
<text x="1388.5" y="837.0" font-size="17.6" text-anchor="start" fill="#f4f4f4" textLength="60.2" lengthAdjust="spacingAndGlyphs">139,88</text>
<text x="1462.0" y="837.0" font-size="17.6" text-anchor="start" fill="#f4f4f4" textLength="60.2" lengthAdjust="spacingAndGlyphs">138,39</text>
</svg>
<div class="pbg" style="left:1039px;top:71px;width:667px;height:521px"></div>
<div class="cbox" style="left:1039px;top:70px;width:667px;height:522px;clip-path:polygon(138.2px 518.9px,137.0px 519.0px,135.9px 518.8px,134.7px 518.1px,133.7px 517.5px,132.5px 516.7px,131.6px 516.0px,130.5px 515.2px,129.3px 514.4px,127.9px 513.4px,126.2px 512.3px,125.3px 511.7px,124.3px 511.0px,123.3px 510.3px,122.2px 509.6px,121.1px 508.8px,119.9px 507.9px,118.6px 507.0px,117.2px 505.9px,115.8px 504.8px,114.3px 503.6px,112.8px 502.3px,111.1px 500.8px,109.4px 499.2px,107.6px 497.3px,105.5px 495.0px,103.3px 492.4px,101.0px 489.5px,98.5px 486.2px,95.9px 482.4px,93.1px 478.2px,90.1px 473.5px,87.0px 468.2px,83.7px 462.2px,80.2px 455.5px,76.4px 448.0px,72.4px 439.7px,68.2px 430.6px,63.7px 420.6px,59.1px 409.6px,54.5px 397.6px,49.8px 384.5px,45.2px 370.4px,40.6px 355.3px,36.0px 339.1px,31.4px 321.9px,26.9px 303.9px,22.6px 285.3px,18.6px 266.1px,14.9px 246.6px,11.6px 227.0px,8.8px 207.5px,6.4px 188.2px,4.6px 169.3px,3.4px 150.9px,2.9px 133.1px,3.0px 116.0px,3.8px 99.7px,5.4px 84.3px,7.8px 70.0px,10.9px 56.8px,14.9px 45.0px,19.5px 34.6px,24.9px 25.8px,30.8px 18.5px,37.3px 12.9px,44.1px 8.9px,51.4px 6.3px,58.9px 5.0px,66.7px 4.9px,74.5px 5.8px,82.6px 7.4px,90.6px 9.7px,98.7px 12.4px,106.8px 15.5px,114.9px 18.8px,122.8px 22.3px,130.6px 25.9px,138.2px 29.6px,145.7px 33.4px,153.2px 37.4px,160.5px 41.4px,167.8px 45.6px,175.1px 49.9px,182.3px 54.3px,189.5px 58.8px,196.7px 63.4px,203.9px 68.1px,211.1px 72.9px,218.2px 77.8px,225.3px 82.7px,232.4px 87.7px,239.5px 92.7px,246.6px 97.8px,253.7px 103.0px,260.8px 108.2px,267.9px 113.4px,275.0px 118.7px,282.1px 124.1px,289.2px 129.4px,296.3px 134.8px,303.4px 140.2px,310.5px 145.6px,317.6px 151.0px,324.6px 156.4px,331.7px 161.8px,338.7px 167.3px,345.7px 172.7px,352.7px 178.1px,359.7px 183.4px,366.6px 188.8px,373.5px 194.1px,380.3px 199.4px,387.1px 204.7px,393.8px 210.0px,400.5px 215.1px,407.1px 220.3px,413.6px 225.4px,420.1px 230.4px,426.5px 235.4px,432.7px 240.2px,438.9px 245.1px,445.0px 249.8px,451.0px 254.4px,456.9px 259.0px,462.6px 263.4px,468.2px 267.8px,473.7px 272.1px,478.9px 276.2px,483.9px 280.1px,488.8px 283.8px,493.5px 287.5px,498.1px 291.0px,502.5px 294.5px,506.8px 297.8px,510.9px 301.0px,514.9px 304.1px,518.7px 307.0px,522.2px 309.8px,525.6px 312.4px,528.9px 314.9px,532.0px 317.3px,534.9px 319.6px,537.6px 321.7px,540.2px 323.8px,542.7px 325.7px,545.0px 327.5px,547.2px 329.2px,549.3px 330.8px,551.3px 332.4px,553.1px 333.8px,554.9px 335.1px,556.5px 336.4px,558.1px 337.6px,559.6px 338.8px,561.0px 339.9px,562.3px 340.9px,563.6px 342.0px,564.9px 342.9px,566.0px 343.8px,567.2px 344.7px,568.2px 345.6px,569.3px 346.4px,570.2px 347.1px,571.1px 347.8px,572.0px 348.5px,573.6px 349.7px,575.0px 350.8px,576.2px 351.7px,577.2px 352.5px,578.1px 353.2px,579.3px 354.1px,580.1px 354.8px,581.1px 355.6px,582.0px 356.3px,583.0px 357.0px)"><div class="cl" style="background:conic-gradient(from 0deg at 508.38px 317.38px,#ffff00 0deg,#ffff00 66.5deg,#ff0000 67deg,#ff0000 121.5deg,#ff00ff 122deg,#ff00ff 246.5deg,#ff02ff 247deg,#ff06ff 247.5deg,#ff09ff 248deg,#ff0dff 248.5deg,#ff11ff 249deg,#ff15ff 249.5deg,#ff19ff 250deg,#ff1dff 250.5deg,#ff21ff 251deg,#ff25ff 251.5deg,#ff29ff 252deg,#ff2eff 252.5deg,#ff32ff 253deg,#ff36ff 253.5deg,#ff3bff 254deg,#ff3fff 254.5deg,#ff44ff 255deg,#ff48ff 255.5deg,#ff4dff 256deg,#ff52ff 256.5deg,#ff57ff 257deg,#ff5cff 257.5deg,#ff61ff 258deg,#ff66ff 258.5deg,#ff6bff 259deg,#ff71ff 259.5deg,#ff76ff 260deg,#ff7cff 260.5deg,#ff82ff 261deg,#ff87ff 261.5deg,#ff8dff 262deg,#ff93ff 262.5deg,#ff9aff 263deg,#ffa0ff 263.5deg,#ffa6ff 264deg,#ffadff 264.5deg,#ffb4ff 265deg,#ffbbff 265.5deg,#ffc2ff 266deg,#ffc9ff 266.5deg,#ffd0ff 267deg,#ffd8ff 267.5deg,#ffe0ff 268deg,#ffe8ff 268.5deg,#fff0ff 269deg,#fff9ff 269.5deg,#fffffd 270deg,#fffff4 270.5deg,#ffffec 271deg,#ffffe4 271.5deg,#ffffdc 272deg,#ffffd5 272.5deg,#ffffce 273deg,#ffffc7 273.5deg,#ffffc1 274deg,#ffffba 274.5deg,#ffffb4 275deg,#ffffae 275.5deg,#ffffa9 276deg,#ffffa3 276.5deg,#ffff9e 277deg,#ffff98 277.5deg,#ffff93 278deg,#ffff8e 278.5deg,#ffff89 279deg,#ffff85 279.5deg,#ffff80 280deg,#ffff7c 280.5deg,#ffff77 281deg,#ffff73 281.5deg,#ffff6f 282deg,#ffff6b 282.5deg,#ffff67 283deg,#ffff63 283.5deg,#ffff60 284deg,#ffff5c 284.5deg,#ffff58 285deg,#ffff55 285.5deg,#ffff51 286deg,#ffff4e 286.5deg,#ffff4b 287deg,#ffff48 287.5deg,#ffff44 288deg,#ffff41 288.5deg,#ffff3e 289deg,#ffff3b 289.5deg,#ffff38 290deg,#ffff36 290.5deg,#ffff33 291deg,#ffff30 291.5deg,#ffff2d 292deg,#ffff2b 292.5deg,#ffff28 293deg,#ffff25 293.5deg,#ffff23 294deg,#ffff20 294.5deg,#ffff1e 295deg,#ffff1c 295.5deg,#ffff19 296deg,#ffff17 296.5deg,#ffff15 297deg,#ffff12 297.5deg,#ffff10 298deg,#ffff0e 298.5deg,#ffff0c 299deg,#ffff0a 299.5deg,#ffff07 300deg,#ffff05 300.5deg,#ffff03 301deg,#ffff01 301.5deg,#ffff00 302deg,#ffff00 360deg)"></div><div class="cl" style="background:conic-gradient(from 0deg at 238.25px 149.97px,#00ff00 0deg,#00ff00 19.5deg,#ffff00 20deg,#ffff00 122deg,#ffff02 122.5deg,#ffff03 123deg,#ffff04 123.5deg,#ffff05 124deg,#ffff06 124.5deg,#ffff07 125deg,#ffff08 125.5deg,#ffff09 126deg,#ffff0a 126.5deg,#ffff0c 127deg,#ffff0d 127.5deg,#ffff0e 128deg,#ffff0f 128.5deg,#ffff10 129deg,#ffff11 129.5deg,#ffff13 130deg,#ffff14 130.5deg,#ffff15 131deg,#ffff16 131.5deg,#ffff17 132deg,#ffff19 132.5deg,#ffff1a 133deg,#ffff1b 133.5deg,#ffff1c 134deg,#ffff1e 134.5deg,#ffff1f 135deg,#ffff20 135.5deg,#ffff21 136deg,#ffff23 136.5deg,#ffff24 137deg,#ffff25 137.5deg,#ffff27 138deg,#ffff28 138.5deg,#ffff29 139deg,#ffff2b 139.5deg,#ffff2c 140deg,#ffff2e 140.5deg,#ffff2f 141deg,#ffff31 141.5deg,#ffff32 142deg,#ffff33 142.5deg,#ffff35 143deg,#ffff36 143.5deg,#ffff38 144deg,#ffff39 144.5deg,#ffff3b 145deg,#ffff3d 145.5deg,#ffff3e 146deg,#ffff40 146.5deg,#ffff41 147deg,#ffff43 147.5deg,#ffff45 148deg,#ffff47 148.5deg,#ffff48 149deg,#ffff4a 149.5deg,#ffff4c 150deg,#ffff4e 150.5deg,#ffff4f 151deg,#ffff51 151.5deg,#ffff53 152deg,#ffff55 152.5deg,#ffff57 153deg,#ffff59 153.5deg,#ffff5b 154deg,#ffff5d 154.5deg,#ffff5f 155deg,#ffff61 155.5deg,#ffff64 156deg,#ffff66 156.5deg,#ffff68 157deg,#ffff6a 157.5deg,#ffff6d 158deg,#ffff6f 158.5deg,#ffff71 159deg,#ffff74 159.5deg,#ffff77 160deg,#ffff79 160.5deg,#ffff7c 161deg,#ffff7e 161.5deg,#ffff81 162deg,#ffff84 162.5deg,#ffff87 163deg,#ffff8a 163.5deg,#ffff8d 164deg,#ffff90 164.5deg,#ffff93 165deg,#ffff97 165.5deg,#ffff9a 166deg,#ffff9d 166.5deg,#ffffa1 167deg,#ffffa5 167.5deg,#ffffa8 168deg,#ffffac 168.5deg,#ffffb0 169deg,#ffffb4 169.5deg,#ffffb8 170deg,#ffffbd 170.5deg,#ffffc1 171deg,#ffffc6 171.5deg,#ffffcb 172deg,#ffffd0 172.5deg,#ffffd5 173deg,#ffffda 173.5deg,#ffffdf 174deg,#ffffe5 174.5deg,#ffffeb 175deg,#fffff1 175.5deg,#fffff8 176deg,#fffffe 176.5deg,#f9ffff 177deg,#f2ffff 177.5deg,#ecffff 178deg,#e5ffff 178.5deg,#dfffff 179deg,#d8ffff 179.5deg,#d2ffff 180deg,#ccffff 180.5deg,#c6ffff 181deg,#c0ffff 181.5deg,#b9ffff 182deg,#b3ffff 182.5deg,#aeffff 183deg,#a8ffff 183.5deg,#a2ffff 184deg,#9cffff 184.5deg,#96ffff 185deg,#91ffff 185.5deg,#8bffff 186deg,#85ffff 186.5deg,#80ffff 187deg,#7affff 187.5deg,#75ffff 188deg,#70ffff 188.5deg,#6affff 189deg,#65ffff 189.5deg,#60ffff 190deg,#5affff 190.5deg,#55ffff 191deg,#50ffff 191.5deg,#4bffff 192deg,#46ffff 192.5deg,#41ffff 193deg,#3cffff 193.5deg,#36ffff 194deg,#31ffff 194.5deg,#2dffff 195deg,#28ffff 195.5deg,#23ffff 196deg,#1effff 196.5deg,#19ffff 197deg,#14ffff 197.5deg,#0fffff 198deg,#0affff 198.5deg,#06ffff 199deg,#01ffff 199.5deg,#00ffff 200deg,#00ffff 301.5deg,#00ff00 302deg,#00ff00 360deg)"></div><div class="cl" style="background:conic-gradient(from 0deg at 119.08px 484.80px,#00ffff 0deg,#00ffff 19.5deg,#04ffff 20deg,#09ffff 20.5deg,#0effff 21deg,#13ffff 21.5deg,#18ffff 22deg,#1dffff 22.5deg,#22ffff 23deg,#27ffff 23.5deg,#2dffff 24deg,#32ffff 24.5deg,#38ffff 25deg,#3effff 25.5deg,#44ffff 26deg,#4affff 26.5deg,#50ffff 27deg,#56ffff 27.5deg,#5cffff 28deg,#63ffff 28.5deg,#6affff 29deg,#71ffff 29.5deg,#77ffff 30deg,#7fffff 30.5deg,#86ffff 31deg,#8dffff 31.5deg,#95ffff 32deg,#9dffff 32.5deg,#a5ffff 33deg,#aeffff 33.5deg,#b6ffff 34deg,#bfffff 34.5deg,#c8ffff 35deg,#d1ffff 35.5deg,#dbffff 36deg,#e5ffff 36.5deg,#efffff 37deg,#f9ffff 37.5deg,#fffaff 38deg,#fff0ff 38.5deg,#ffe6ff 39deg,#ffddff 39.5deg,#ffd4ff 40deg,#ffccff 40.5deg,#ffc4ff 41deg,#ffbcff 41.5deg,#ffb4ff 42deg,#ffadff 42.5deg,#ffa7ff 43deg,#ffa0ff 43.5deg,#ff9aff 44deg,#ff94ff 44.5deg,#ff8eff 45deg,#ff88ff 45.5deg,#ff83ff 46deg,#ff7eff 46.5deg,#ff79ff 47deg,#ff74ff 47.5deg,#ff6fff 48deg,#ff6aff 48.5deg,#ff66ff 49deg,#ff62ff 49.5deg,#ff5dff 50deg,#ff59ff 50.5deg,#ff56ff 51deg,#ff52ff 51.5deg,#ff4eff 52deg,#ff4aff 52.5deg,#ff47ff 53deg,#ff43ff 53.5deg,#ff40ff 54deg,#ff3dff 54.5deg,#ff3aff 55deg,#ff37ff 55.5deg,#ff34ff 56deg,#ff31ff 56.5deg,#ff2eff 57deg,#ff2bff 57.5deg,#ff28ff 58deg,#ff25ff 58.5deg,#ff23ff 59deg,#ff20ff 59.5deg,#ff1eff 60deg,#ff1bff 60.5deg,#ff19ff 61deg,#ff16ff 61.5deg,#ff14ff 62deg,#ff12ff 62.5deg,#ff10ff 63deg,#ff0dff 63.5deg,#ff0bff 64deg,#ff09ff 64.5deg,#ff07ff 65deg,#ff05ff 65.5deg,#ff03ff 66deg,#ff01ff 66.5deg,#ff00ff 67deg,#ff00ff 199.5deg,#0000ff 200deg,#0000ff 246.5deg,#00ffff 247deg,#00ffff 360deg)"></div><div class="dk" style="clip-path:path(evenodd,'M0 0H667V522H0Z M508.4 317.4L238.2 150.0L119.1 484.8Z')"></div></div>
<div class="cbox" style="left:1517px;top:72px;width:189px;height:189px"><div class="cl" style="background:conic-gradient(from 299deg at 929.05px 756.33px,#ffff26 0deg,#ffff26 0.1deg,#ffff25 0.2deg,#ffff25 0.3deg,#ffff24 0.4deg,#ffff24 0.5deg,#ffff23 0.6deg,#ffff23 0.8deg,#ffff22 0.9deg,#ffff22 1deg,#ffff21 1.1deg,#ffff21 1.2deg,#ffff20 1.3deg,#ffff20 1.5deg,#ffff1f 1.6deg,#ffff1f 1.7deg,#ffff1e 1.8deg,#ffff1e 1.9deg,#ffff1d 2deg,#ffff1d 2.2deg,#ffff1c 2.3deg,#ffff1c 2.4deg,#ffff1b 2.5deg,#ffff1b 2.6deg,#ffff1a 2.7deg,#ffff1a 2.9deg,#ffff19 3deg,#ffff19 3.1deg,#ffff18 3.2deg,#ffff18 3.4deg,#ffff17 3.5deg,#ffff17 3.6deg,#ffff16 3.7deg,#ffff16 3.9deg,#ffff15 4deg,#ffff15 4.1deg,#ffff14 4.2deg,#ffff14 4.4deg,#ffff13 4.5deg,#ffff13 4.6deg,#ffff12 4.7deg,#ffff12 4.9deg,#ffff11 5deg,#ffff11 5.1deg,#ffff10 5.2deg,#ffff10 5.4deg,#ffff0f 5.5deg,#ffff0f 5.6deg,#ffff0e 5.7deg,#ffff0e 5.9deg,#ffff0d 6deg,#ffff0d 6.1deg,#ffff0c 6.2deg,#ffff0c 6.4deg,#ffff0b 6.5deg,#ffff0b 6.6deg,#ffff0a 6.7deg,#ffff0a 6.9deg,#ffff09 7deg,#ffff09 7.2deg,#ffff08 7.3deg,#ffff08 7.4deg,#ffff07 7.5deg,#ffff07 7.7deg,#ffff06 7.8deg,#ffff06 7.9deg,#ffff05 8deg,#ffff05 8.2deg,#ffff04 8.3deg,#ffff04 8.5deg,#ffff03 8.6deg,#ffff03 8.7deg,#ffff02 8.8deg,#ffff02 9deg,#ffff01 9.1deg,#ffff01 9.3deg,#ffff00 9.4deg,#ffff00 19deg)"></div><div class="cl" style="background:conic-gradient(from 113deg at -356.15px -264.27px,#ffff00 0deg,#ffff00 15.7deg,#ffff01 15.8deg,#ffff01 16.1deg,#ffff02 16.2deg,#ffff02 16.6deg,#ffff03 16.7deg,#ffff03 17.1deg,#ffff04 17.2deg,#ffff04 17.6deg,#ffff05 17.7deg,#ffff05 18.1deg,#ffff06 18.2deg,#ffff06 18.6deg,#ffff07 18.7deg,#ffff07 19deg,#ffff08 19.1deg,#ffff08 19.5deg,#ffff09 19.6deg,#ffff09 20deg,#ffff0a 20.1deg,#ffff0a 20.4deg,#ffff0b 20.5deg,#ffff0b 20.9deg,#ffff0c 21deg,#ffff0c 21.3deg,#ffff0d 21.4deg,#ffff0d 21.8deg,#ffff0e 21.9deg,#ffff0e 22.2deg,#ffff0f 22.3deg,#ffff0f 22.7deg,#ffff10 22.8deg,#ffff10 23.1deg,#ffff11 23.2deg,#ffff11 23.5deg,#ffff12 23.6deg,#ffff12 24deg,#ffff13 24.1deg,#ffff13 24.4deg,#ffff14 24.5deg,#ffff14 24.8deg,#ffff15 24.9deg,#ffff15 25.2deg,#ffff16 25.3deg,#ffff16 25.7deg,#ffff17 25.8deg,#ffff17 26.1deg,#ffff18 26.2deg,#ffff18 26.5deg,#ffff19 26.6deg,#ffff19 26.9deg,#ffff1a 27deg,#ffff1a 27.3deg,#ffff1b 27.4deg,#ffff1b 27.7deg,#ffff1c 27.8deg,#ffff1c 28.1deg,#ffff1d 28.2deg,#ffff1d 28.4deg,#ffff1e 28.5deg,#ffff1e 28.8deg,#ffff1f 28.9deg,#ffff1f 29.2deg,#ffff20 29.3deg,#ffff20 29.6deg,#ffff21 29.7deg,#ffff21 30deg,#ffff22 30.1deg,#ffff22 30.3deg,#ffff23 30.4deg,#ffff23 30.7deg,#ffff24 30.8deg,#ffff24 31deg)"></div><div class="cl" style="background:conic-gradient(from 25deg at -923.15px 1776.93px,#84ffff 0deg,#86ffff 0.1deg,#87ffff 0.2deg,#89ffff 0.3deg,#8bffff 0.4deg,#8cffff 0.5deg,#8effff 0.6deg,#90ffff 0.7deg,#92ffff 0.8deg,#93ffff 0.9deg,#95ffff 1deg,#97ffff 1.1deg,#99ffff 1.2deg,#9bffff 1.3deg,#9cffff 1.4deg,#9effff 1.5deg,#a0ffff 1.6deg,#a2ffff 1.7deg,#a4ffff 1.8deg,#a6ffff 1.9deg,#a7ffff 2deg,#a9ffff 2.1deg,#abffff 2.2deg,#adffff 2.3deg,#afffff 2.4deg,#b1ffff 2.5deg,#b3ffff 2.6deg,#b5ffff 2.7deg,#b7ffff 2.8deg,#b9ffff 2.9deg,#bbffff 3deg,#bdffff 3.1deg,#bfffff 3.2deg,#c1ffff 3.3deg,#c3ffff 3.4deg,#c5ffff 3.5deg,#c7ffff 3.6deg,#c9ffff 3.7deg,#cbffff 3.8deg,#cdffff 3.9deg,#cfffff 4deg,#d1ffff 4.1deg,#d3ffff 4.2deg,#d5ffff 4.3deg,#d7ffff 4.4deg,#daffff 4.5deg,#dcffff 4.6deg,#deffff 4.7deg,#e0ffff 4.8deg,#e2ffff 4.9deg,#e4ffff 5deg,#e7ffff 5.1deg,#e9ffff 5.2deg,#ebffff 5.3deg,#edffff 5.4deg,#f0ffff 5.5deg,#f2ffff 5.6deg,#f4ffff 5.7deg,#f6ffff 5.8deg,#f9ffff 5.9deg,#fbffff 6deg,#fdffff 6.1deg,#fffeff 6.2deg,#fffcff 6.3deg,#fffaff 6.4deg,#fff7ff 6.5deg,#fff5ff 6.6deg,#fff3ff 6.7deg,#fff1ff 6.8deg,#ffeeff 6.9deg,#ffecff 7deg,#ffeaff 7.1deg,#ffe8ff 7.2deg,#ffe6ff 7.3deg,#ffe4ff 7.4deg,#ffe2ff 7.5deg,#ffe0ff 7.6deg,#ffdeff 7.7deg,#ffdcff 7.8deg,#ffdaff 7.9deg,#ffd8ff 8deg,#ffd6ff 8.1deg,#ffd4ff 8.2deg,#ffd3ff 8.3deg,#ffd1ff 8.4deg,#ffcfff 8.5deg,#ffcdff 8.6deg,#ffcbff 8.7deg,#ffcaff 8.8deg,#ffc8ff 8.9deg,#ffc6ff 9deg,#ffc4ff 9.1deg,#ffc3ff 9.2deg,#ffc1ff 9.3deg,#ffbfff 9.4deg,#ffbeff 9.5deg,#ffbcff 9.6deg,#ffbbff 9.7deg,#ffb9ff 9.8deg,#ffb7ff 9.9deg,#ffb6ff 10deg,#ffb4ff 10.1deg,#ffb3ff 10.2deg,#ffb1ff 10.3deg,#ffb0ff 10.4deg,#ffaeff 10.5deg,#ffadff 10.6deg,#ffabff 10.7deg,#ffaaff 10.8deg,#ffa9ff 10.9deg,#ffa7ff 11deg,#ffa6ff 11.1deg,#ffa4ff 11.2deg,#ffa3ff 11.3deg,#ffa2ff 11.4deg,#ffa0ff 11.5deg,#ff9fff 11.6deg,#ff9eff 11.7deg,#ff9cff 11.8deg,#ff9bff 11.9deg,#ff9aff 12deg,#ff98ff 12.1deg,#ff97ff 12.2deg,#ff96ff 12.3deg,#ff95ff 12.4deg,#ff93ff 12.5deg,#ff92ff 12.6deg,#ff91ff 12.7deg,#ff90ff 12.8deg,#ff8fff 12.9deg,#ff8dff 13deg)"></div><div class="dk" style="clip-path:path(evenodd,'M0 0H189V189H0Z M929.0 756.3L-356.2 -264.3L-923.2 1776.9Z')"></div></div>
<svg width="1717" height="887" viewBox="0 0 1717 887">
<rect x="1002.0" y="40.0" width="7.2" height="589.0" fill="#0484a6"/>
<rect x="1002.0" y="40.0" width="712.3" height="7.2" fill="#0484a6"/>
<rect x="1002.0" y="621.9" width="712.3" height="7.2" fill="#0484a6"/>
<rect x="1709.9" y="40.0" width="4.4" height="589.0" fill="#0484a6"/>
<line x1="1038.0" y1="70.6" x2="1514.0" y2="70.6" stroke="#9a9a9a" stroke-width="1.5"/>
<line x1="1038.9" y1="70.0" x2="1038.9" y2="593.0" stroke="#9a9a9a" stroke-width="1.8"/>
<line x1="1038.5" y1="592.0" x2="1707.0" y2="592.0" stroke="#9a9a9a" stroke-width="1.8"/>
<line x1="1706.0" y1="264.0" x2="1706.0" y2="593.0" stroke="#9a9a9a" stroke-width="1.6"/>
<text x="1359.0" y="66.0" font-size="16" text-anchor="middle" fill="#e4e4e4" textLength="79.7" lengthAdjust="spacingAndGlyphs">CIE 1931 xy</text>
<line x1="1038.9" y1="592.0" x2="1038.9" y2="598.0" stroke="#dcdcdc" stroke-width="1.8"/>
<text x="1038.9" y="614.2" font-size="16" text-anchor="middle" fill="#e4e4e4" textLength="8.4" lengthAdjust="spacingAndGlyphs">0</text>
<line x1="1033.5" y1="592.0" x2="1039.5" y2="592.0" stroke="#dcdcdc" stroke-width="1.8"/>
<text x="1033.7" y="599.0" font-size="16" text-anchor="end" fill="#e4e4e4" textLength="8.4" lengthAdjust="spacingAndGlyphs">0</text>
<line x1="1118.4" y1="592.0" x2="1118.4" y2="598.0" stroke="#dcdcdc" stroke-width="1.8"/>
<text x="1118.4" y="614.2" font-size="16" text-anchor="middle" fill="#e4e4e4" textLength="20.9" lengthAdjust="spacingAndGlyphs">0,1</text>
<line x1="1033.5" y1="530.0" x2="1039.5" y2="530.0" stroke="#dcdcdc" stroke-width="1.8"/>
<text x="1033.7" y="537.0" font-size="16" text-anchor="end" fill="#e4e4e4" textLength="20.9" lengthAdjust="spacingAndGlyphs">0,1</text>
<line x1="1197.8" y1="592.0" x2="1197.8" y2="598.0" stroke="#dcdcdc" stroke-width="1.8"/>
<text x="1197.8" y="614.2" font-size="16" text-anchor="middle" fill="#e4e4e4" textLength="20.9" lengthAdjust="spacingAndGlyphs">0,2</text>
<line x1="1033.5" y1="468.0" x2="1039.5" y2="468.0" stroke="#dcdcdc" stroke-width="1.8"/>
<text x="1033.7" y="475.0" font-size="16" text-anchor="end" fill="#e4e4e4" textLength="20.9" lengthAdjust="spacingAndGlyphs">0,2</text>
<line x1="1277.2" y1="592.0" x2="1277.2" y2="598.0" stroke="#dcdcdc" stroke-width="1.8"/>
<text x="1277.2" y="614.2" font-size="16" text-anchor="middle" fill="#e4e4e4" textLength="20.9" lengthAdjust="spacingAndGlyphs">0,3</text>
<line x1="1033.5" y1="406.0" x2="1039.5" y2="406.0" stroke="#dcdcdc" stroke-width="1.8"/>
<text x="1033.7" y="413.0" font-size="16" text-anchor="end" fill="#e4e4e4" textLength="20.9" lengthAdjust="spacingAndGlyphs">0,3</text>
<line x1="1356.7" y1="592.0" x2="1356.7" y2="598.0" stroke="#dcdcdc" stroke-width="1.8"/>
<text x="1356.7" y="614.2" font-size="16" text-anchor="middle" fill="#e4e4e4" textLength="20.9" lengthAdjust="spacingAndGlyphs">0,4</text>
<line x1="1033.5" y1="344.0" x2="1039.5" y2="344.0" stroke="#dcdcdc" stroke-width="1.8"/>
<text x="1033.7" y="351.0" font-size="16" text-anchor="end" fill="#e4e4e4" textLength="20.9" lengthAdjust="spacingAndGlyphs">0,4</text>
<line x1="1436.2" y1="592.0" x2="1436.2" y2="598.0" stroke="#dcdcdc" stroke-width="1.8"/>
<text x="1436.2" y="614.2" font-size="16" text-anchor="middle" fill="#e4e4e4" textLength="20.9" lengthAdjust="spacingAndGlyphs">0,5</text>
<line x1="1033.5" y1="282.0" x2="1039.5" y2="282.0" stroke="#dcdcdc" stroke-width="1.8"/>
<text x="1033.7" y="289.0" font-size="16" text-anchor="end" fill="#e4e4e4" textLength="20.9" lengthAdjust="spacingAndGlyphs">0,5</text>
<line x1="1515.6" y1="592.0" x2="1515.6" y2="598.0" stroke="#dcdcdc" stroke-width="1.8"/>
<text x="1515.6" y="614.2" font-size="16" text-anchor="middle" fill="#e4e4e4" textLength="20.9" lengthAdjust="spacingAndGlyphs">0,6</text>
<line x1="1033.5" y1="220.0" x2="1039.5" y2="220.0" stroke="#dcdcdc" stroke-width="1.8"/>
<text x="1033.7" y="227.0" font-size="16" text-anchor="end" fill="#e4e4e4" textLength="20.9" lengthAdjust="spacingAndGlyphs">0,6</text>
<line x1="1595.1" y1="592.0" x2="1595.1" y2="598.0" stroke="#dcdcdc" stroke-width="1.8"/>
<text x="1595.1" y="614.2" font-size="16" text-anchor="middle" fill="#e4e4e4" textLength="20.9" lengthAdjust="spacingAndGlyphs">0,7</text>
<line x1="1033.5" y1="158.0" x2="1039.5" y2="158.0" stroke="#dcdcdc" stroke-width="1.8"/>
<text x="1033.7" y="165.0" font-size="16" text-anchor="end" fill="#e4e4e4" textLength="20.9" lengthAdjust="spacingAndGlyphs">0,7</text>
<line x1="1674.5" y1="592.0" x2="1674.5" y2="598.0" stroke="#dcdcdc" stroke-width="1.8"/>
<text x="1674.5" y="614.2" font-size="16" text-anchor="middle" fill="#e4e4e4" textLength="20.9" lengthAdjust="spacingAndGlyphs">0,8</text>
<line x1="1033.5" y1="96.0" x2="1039.5" y2="96.0" stroke="#dcdcdc" stroke-width="1.8"/>
<text x="1033.7" y="103.0" font-size="16" text-anchor="end" fill="#e4e4e4" textLength="20.9" lengthAdjust="spacingAndGlyphs">0,8</text>
<rect x="1515.0" y="70.0" width="192.5" height="193.5" fill="none" stroke="#323232" stroke-width="2.4"/>
<rect x="1516.5" y="71.5" width="190.0" height="190.0" fill="none" stroke="#a0a0a0" stroke-width="1.2"/>
<rect x="1268.75" y="212.75" width="14.50" height="13.50" fill="none" stroke="#fff" stroke-width="1.5"/>
<rect x="1271.75" y="248.75" width="14.50" height="13.50" fill="none" stroke="#fff" stroke-width="1.5"/>
<rect x="1272.75" y="281.75" width="14.50" height="13.50" fill="none" stroke="#fff" stroke-width="1.5"/>
<rect x="1275.75" y="313.75" width="14.50" height="13.50" fill="none" stroke="#fff" stroke-width="1.5"/>
<rect x="1276.75" y="346.75" width="14.50" height="13.50" fill="none" stroke="#fff" stroke-width="1.5"/>
<rect x="1363.75" y="271.75" width="14.50" height="13.50" fill="none" stroke="#fff" stroke-width="1.5"/>
<rect x="1345.75" y="293.75" width="14.50" height="13.50" fill="none" stroke="#fff" stroke-width="1.5"/>
<rect x="1330.75" y="313.75" width="14.50" height="13.50" fill="none" stroke="#fff" stroke-width="1.5"/>
<rect x="1313.75" y="335.75" width="14.50" height="13.50" fill="none" stroke="#fff" stroke-width="1.5"/>
<rect x="1296.75" y="358.75" width="14.50" height="13.50" fill="none" stroke="#fff" stroke-width="1.5"/>
<rect x="1210.75" y="380.75" width="14.50" height="13.50" fill="none" stroke="#fff" stroke-width="1.5"/>
<rect x="1224.75" y="380.75" width="14.50" height="13.50" fill="none" stroke="#fff" stroke-width="1.5"/>
<rect x="1238.75" y="380.75" width="14.50" height="13.50" fill="none" stroke="#fff" stroke-width="1.5"/>
<rect x="1252.75" y="380.75" width="14.50" height="13.50" fill="none" stroke="#fff" stroke-width="1.5"/>
<rect x="1266.75" y="380.75" width="14.50" height="13.50" fill="none" stroke="#fff" stroke-width="1.5"/>
<rect x="1539.75" y="379.75" width="14.50" height="13.50" fill="none" stroke="#fff" stroke-width="1.5"/>
<rect x="1482.75" y="379.75" width="14.50" height="13.50" fill="none" stroke="#fff" stroke-width="1.5"/>
<rect x="1431.75" y="379.75" width="14.50" height="13.50" fill="none" stroke="#fff" stroke-width="1.5"/>
<rect x="1383.75" y="379.75" width="14.50" height="13.50" fill="none" stroke="#fff" stroke-width="1.5"/>
<rect x="1330.75" y="380.75" width="14.50" height="13.50" fill="none" stroke="#fff" stroke-width="1.5"/>
<rect x="1149.75" y="547.75" width="14.50" height="13.50" fill="none" stroke="#fff" stroke-width="1.5"/>
<rect x="1177.75" y="511.75" width="14.50" height="13.50" fill="none" stroke="#fff" stroke-width="1.5"/>
<rect x="1202.75" y="478.75" width="14.50" height="13.50" fill="none" stroke="#fff" stroke-width="1.5"/>
<rect x="1228.75" y="446.75" width="14.50" height="13.50" fill="none" stroke="#fff" stroke-width="1.5"/>
<rect x="1252.75" y="414.75" width="14.50" height="13.50" fill="none" stroke="#fff" stroke-width="1.5"/>
<rect x="1285.75" y="488.75" width="14.50" height="13.50" fill="none" stroke="#fff" stroke-width="1.5"/>
<rect x="1284.75" y="466.75" width="14.50" height="13.50" fill="none" stroke="#fff" stroke-width="1.5"/>
<rect x="1282.75" y="444.75" width="14.50" height="13.50" fill="none" stroke="#fff" stroke-width="1.5"/>
<rect x="1282.75" y="424.75" width="14.50" height="13.50" fill="none" stroke="#fff" stroke-width="1.5"/>
<rect x="1281.75" y="401.75" width="14.50" height="13.50" fill="none" stroke="#fff" stroke-width="1.5"/>
<circle cx="1319.9" cy="237.9" r="4.3" fill="#00be00" stroke="#000" stroke-width="1.2"/>
<circle cx="1313.8" cy="268.8" r="4.3" fill="#20be20" stroke="#000" stroke-width="1.2"/>
<circle cx="1306.9" cy="299.4" r="4.3" fill="#45be45" stroke="#000" stroke-width="1.2"/>
<circle cx="1299.9" cy="328.9" r="4.3" fill="#6cbe6c" stroke="#000" stroke-width="1.2"/>
<circle cx="1293.8" cy="356.7" r="4.3" fill="#95be95" stroke="#000" stroke-width="1.2"/>
<circle cx="1384.0" cy="280.7" r="4.3" fill="#bebe00" stroke="#000" stroke-width="1.2"/>
<circle cx="1362.8" cy="301.9" r="4.3" fill="#bebe20" stroke="#000" stroke-width="1.2"/>
<circle cx="1344.7" cy="324.7" r="4.3" fill="#bebe45" stroke="#000" stroke-width="1.2"/>
<circle cx="1324.9" cy="343.6" r="4.3" fill="#bebe6c" stroke="#000" stroke-width="1.2"/>
<circle cx="1306.6" cy="364.8" r="4.3" fill="#bebe95" stroke="#000" stroke-width="1.2"/>
<circle cx="1236.8" cy="390.8" r="4.3" fill="#00bebe" stroke="#000" stroke-width="1.2"/>
<circle cx="1246.8" cy="390.8" r="4.3" fill="#20bebe" stroke="#000" stroke-width="1.2"/>
<circle cx="1256.5" cy="389.0" r="4.3" fill="#45bebe" stroke="#000" stroke-width="1.2"/>
<circle cx="1265.9" cy="387.9" r="4.3" fill="#6cbebe" stroke="#000" stroke-width="1.2"/>
<circle cx="1276.1" cy="387.9" r="4.3" fill="#95bebe" stroke="#000" stroke-width="1.2"/>
<circle cx="1502.0" cy="365.1" r="4.3" fill="#be0000" stroke="#000" stroke-width="1.2"/>
<circle cx="1449.8" cy="369.4" r="4.3" fill="#be2020" stroke="#000" stroke-width="1.2"/>
<circle cx="1413.7" cy="374.1" r="4.3" fill="#be4545" stroke="#000" stroke-width="1.2"/>
<circle cx="1369.7" cy="377.8" r="4.3" fill="#be6c6c" stroke="#000" stroke-width="1.2"/>
<circle cx="1328.0" cy="382.0" r="4.3" fill="#be9595" stroke="#000" stroke-width="1.2"/>
<circle cx="1167.9" cy="516.8" r="4.3" fill="#00008c" stroke="#000" stroke-width="1.2"/>
<circle cx="1189.1" cy="493.8" r="4.3" fill="#2020be" stroke="#000" stroke-width="1.2"/>
<circle cx="1213.0" cy="468.8" r="4.3" fill="#4545be" stroke="#000" stroke-width="1.2"/>
<circle cx="1236.9" cy="442.4" r="4.3" fill="#6c6cbe" stroke="#000" stroke-width="1.2"/>
<circle cx="1261.0" cy="416.1" r="4.3" fill="#9595be" stroke="#000" stroke-width="1.2"/>
<circle cx="1268.9" cy="472.0" r="4.3" fill="#be00be" stroke="#000" stroke-width="1.2"/>
<circle cx="1271.8" cy="454.8" r="4.3" fill="#be20be" stroke="#000" stroke-width="1.2"/>
<circle cx="1275.6" cy="437.0" r="4.3" fill="#be45be" stroke="#000" stroke-width="1.2"/>
<circle cx="1279.9" cy="422.8" r="4.3" fill="#be6cbe" stroke="#000" stroke-width="1.2"/>
<circle cx="1282.8" cy="405.0" r="4.3" fill="#be95be" stroke="#000" stroke-width="1.2"/>
<rect x="1280.80" y="380.80" width="14.40" height="13.40" fill="none" stroke="#000" stroke-width="1.6"/>
<circle cx="1286.2" cy="388.9" r="4.0" fill="#fff" stroke="#000" stroke-width="1.2"/>
<rect x="1603.75" y="158.75" width="14.50" height="13.50" fill="none" stroke="#fff" stroke-width="1.5"/>
<circle cx="1669.0" cy="184.8" r="4.3" fill="#b9b900" stroke="#000" stroke-width="1.2"/>
</svg>
</body></html>
